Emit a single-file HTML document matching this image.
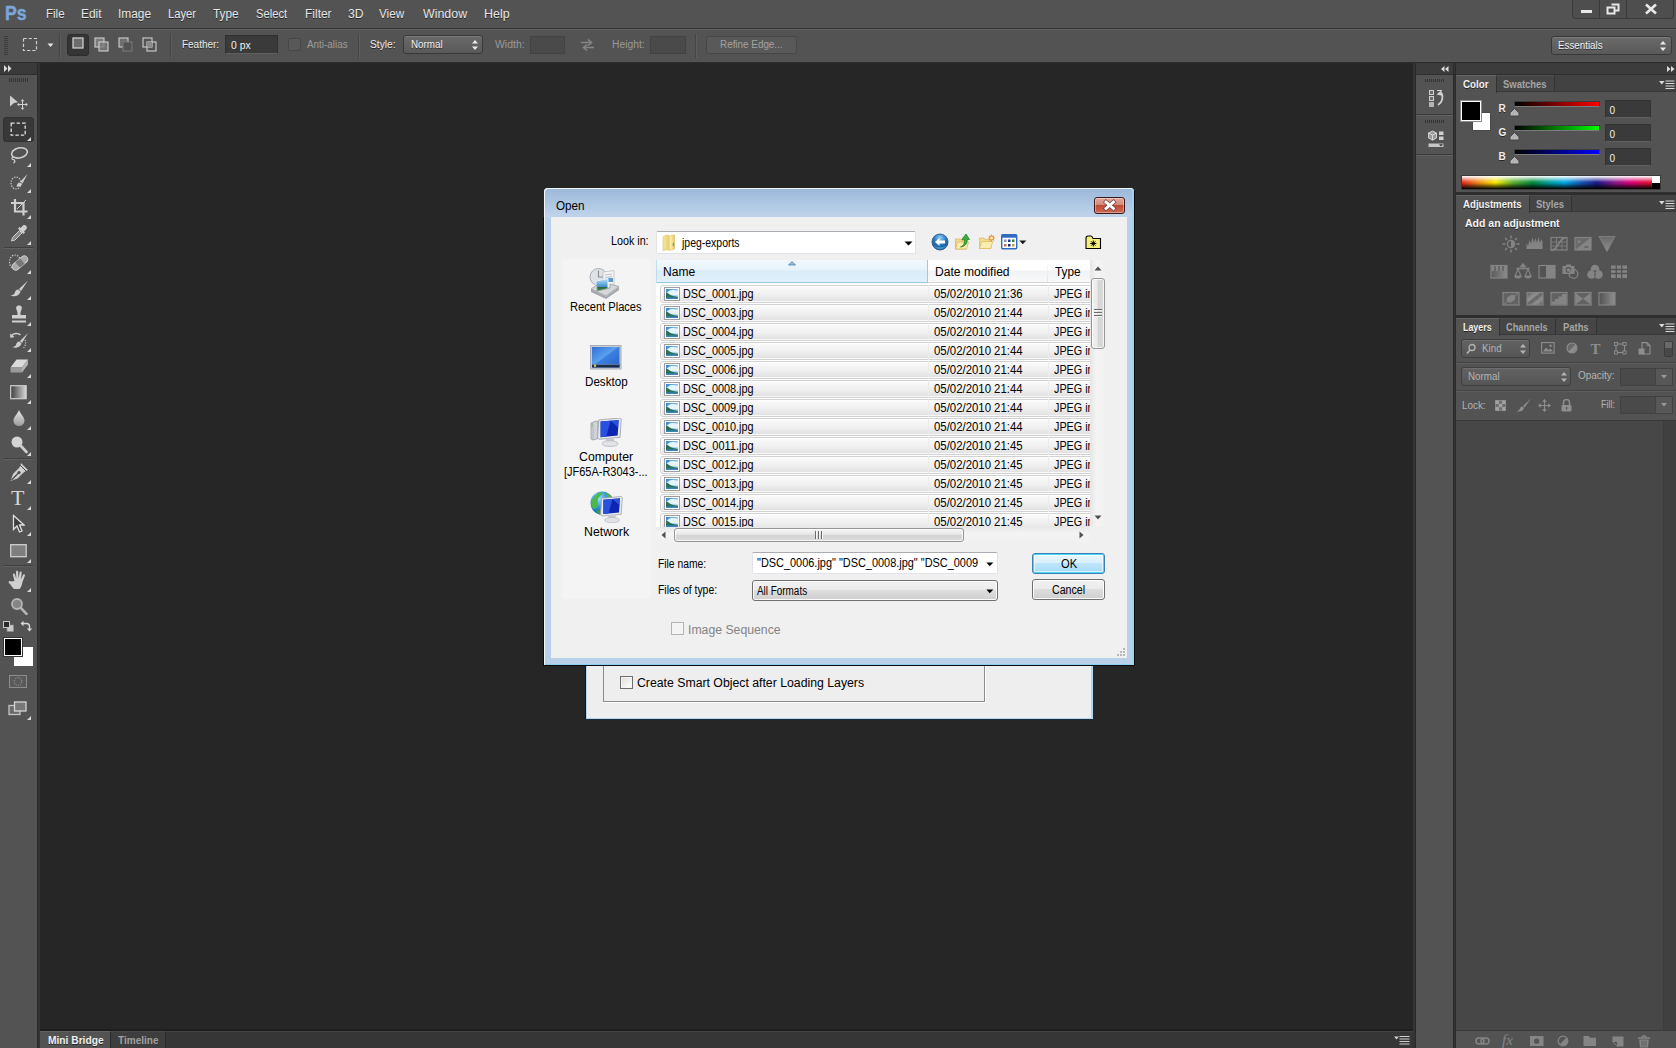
<!DOCTYPE html>
<html><head><meta charset="utf-8"><title>Photoshop - Open</title>
<style>
html,body{margin:0;padding:0;}
body{width:1676px;height:1048px;overflow:hidden;background:#262626;position:relative;font-family:"Liberation Sans",sans-serif;}
.b{position:absolute;box-sizing:border-box;display:block;}
.t{position:absolute;white-space:nowrap;display:block;transform-origin:0 50%;}
.sh{text-shadow:0 1px 0 rgba(0,0,0,.55);}
.bd{font-weight:bold;}
</style></head><body>
<div class="b " style="left:0px;top:0px;width:1676px;height:28px;background:#535353;"></div>
<div class="b " style="left:0px;top:28px;width:1676px;height:1px;background:#333;"></div>
<div class="b " style="left:0px;top:29px;width:1676px;height:33px;background:#535353;border-top:1px solid #626262;"></div>
<div class="b " style="left:0px;top:62px;width:1676px;height:1px;background:#2c2c2c;"></div>
<span id="t1" class="t " style="left:5px;top:1px;font-size:21px;line-height:24px;color:#7aa6da;transform:scaleX(0.8409);font-weight:bold;-webkit-text-stroke:.500px #7aa6da;">Ps</span>
<span id="t2" class="t sh" style="left:46px;top:5px;font-size:13px;line-height:17px;color:#e6e6e6;transform:scaleX(0.8877);">File</span>
<span id="t3" class="t sh" style="left:81px;top:5px;font-size:13px;line-height:17px;color:#e6e6e6;transform:scaleX(0.9194);">Edit</span>
<span id="t4" class="t sh" style="left:117.5px;top:5px;font-size:13px;line-height:17px;color:#e6e6e6;transform:scaleX(0.9159);">Image</span>
<span id="t5" class="t sh" style="left:168px;top:5px;font-size:13px;line-height:17px;color:#e6e6e6;transform:scaleX(0.8638);">Layer</span>
<span id="t6" class="t sh" style="left:212.5px;top:5px;font-size:13px;line-height:17px;color:#e6e6e6;transform:scaleX(0.9082);">Type</span>
<span id="t7" class="t sh" style="left:255.5px;top:5px;font-size:13px;line-height:17px;color:#e6e6e6;transform:scaleX(0.8605);">Select</span>
<span id="t8" class="t sh" style="left:304.5px;top:5px;font-size:13px;line-height:17px;color:#e6e6e6;transform:scaleX(0.9207);">Filter</span>
<span id="t9" class="t sh" style="left:347.5px;top:5px;font-size:13px;line-height:17px;color:#e6e6e6;transform:scaleX(0.9383);">3D</span>
<span id="t10" class="t sh" style="left:379px;top:5px;font-size:13px;line-height:17px;color:#e6e6e6;transform:scaleX(0.8979);">View</span>
<span id="t11" class="t sh" style="left:423px;top:5px;font-size:13px;line-height:17px;color:#e6e6e6;transform:scaleX(0.9535);">Window</span>
<span id="t12" class="t sh" style="left:484px;top:5px;font-size:13px;line-height:17px;color:#e6e6e6;transform:scaleX(0.9570);">Help</span>
<div class="b " style="left:1572px;top:0px;width:102px;height:19px;background:#4e4e4e;border:1px solid #3a3a3a;border-top:none;border-radius:0 0 4px 4px;"></div>
<div class="b " style="left:1599px;top:0px;width:1px;height:18px;background:#3a3a3a;"></div>
<div class="b " style="left:1626px;top:0px;width:1px;height:18px;background:#3a3a3a;"></div>
<div class="b " style="left:1581px;top:10px;width:11px;height:3px;background:#e8e8e8;"></div>
<svg class="b" style="left:1606px;top:3px;" width="14" height="12" viewBox="0 0 14 12"><path d="M5.5 1.5h7v6h-3M1.5 4.5h7v6h-7z" fill="none" stroke="#e8e8e8" stroke-width="2"/></svg>
<svg class="b" style="left:1644px;top:3px;" width="14" height="12" viewBox="0 0 14 12"><path d="M2 1.5l10 9M12 1.5l-10 9" fill="none" stroke="#e8e8e8" stroke-width="2.6"/></svg>
<div class="b " style="left:4px;top:36px;width:4px;height:20px;background:repeating-linear-gradient(#3c3c3c 0 1px,transparent 1px 2px);"></div>
<svg class="b" style="left:22px;top:37px;" width="17" height="17" viewBox="0 0 17 17"><rect x="1.5" y="1.5" width="13" height="12" fill="none" stroke="#d0d0d0" stroke-width="1.2" stroke-dasharray="3.2 2"/></svg>
<svg class="b" style="left:47px;top:43px;" width="8" height="5" viewBox="0 0 8 5"><path d="M0.5 0.5h6l-3 3.6z" fill="#e4e4e4"/></svg>
<div class="b " style="left:59px;top:34px;width:1px;height:24px;background:#454545;border-right:1px solid #5e5e5e;width:2px;"></div>
<div class="b " style="left:67px;top:34px;width:22px;height:22px;background:#353535;border:1px solid #2d2d2d;border-radius:3px;"></div>
<svg class="b" style="left:72px;top:37px;" width="12" height="12" viewBox="0 0 12 12"><rect x="1" y="1" width="10" height="10" fill="#6c6c6c" stroke="#d8d8d8" stroke-width="1.2"/></svg>
<svg class="b" style="left:94px;top:37px;" width="16" height="16" viewBox="0 0 16 16"><rect x="1" y="1" width="9" height="9" fill="#7a7a7a" stroke="#cfcfcf" stroke-width="1.1"/><rect x="5" y="5" width="9" height="9" fill="#7a7a7a" fill-opacity=".8" stroke="#cfcfcf" stroke-width="1.1"/></svg>
<svg class="b" style="left:118px;top:37px;" width="16" height="16" viewBox="0 0 16 16"><rect x="1" y="1" width="9" height="9" fill="#6e6e6e" stroke="#cfcfcf" stroke-width="1.1"/><rect x="5" y="5" width="9" height="9" fill="#535353" stroke="#777" stroke-width="1.1"/></svg>
<svg class="b" style="left:142px;top:37px;" width="16" height="16" viewBox="0 0 16 16"><rect x="1" y="1" width="9" height="9" fill="none" stroke="#cfcfcf" stroke-width="1.1"/><rect x="5" y="5" width="9" height="9" fill="none" stroke="#cfcfcf" stroke-width="1.1"/><rect x="5" y="5" width="5" height="5" fill="#8a8a8a"/></svg>
<div class="b " style="left:170px;top:34px;width:2px;height:24px;background:#454545;border-right:1px solid #5e5e5e;"></div>
<span id="t13" class="t sh" style="left:181.5px;top:37px;font-size:10px;line-height:15px;color:#ececec;transform:scaleX(0.9960);">Feather:</span>
<div class="b " style="left:225px;top:35px;width:53px;height:19px;background:#3a3a3a;border:1px solid #2f2f2f;border-bottom-color:#606060;"></div>
<span id="t14" class="t " style="left:230.5px;top:38px;font-size:10px;line-height:15px;color:#f0f0f0;transform:scaleX(1.0367);">0 px</span>
<div class="b " style="left:288px;top:38px;width:13px;height:13px;background:#585858;border:1px solid #474747;border-radius:2px;"></div>
<span id="t15" class="t " style="left:306.5px;top:37px;font-size:10px;line-height:15px;color:#9c9c9c;transform:scaleX(0.9869);">Anti-alias</span>
<div class="b " style="left:358px;top:34px;width:2px;height:24px;background:#454545;border-right:1px solid #5e5e5e;"></div>
<span id="t16" class="t sh" style="left:370px;top:37px;font-size:10px;line-height:15px;color:#ececec;transform:scaleX(1.0234);">Style:</span>
<div class="b " style="left:403px;top:35px;width:80px;height:19px;background:linear-gradient(#6a6a6a,#595959);border:1px solid #383838;border-radius:3px;box-shadow:inset 0 1px 0 #7c7c7c;"></div>
<span id="t17" class="t sh" style="left:411px;top:37px;font-size:10px;line-height:15px;color:#f2f2f2;transform:scaleX(0.9803);">Normal</span>
<svg class="b" style="left:471px;top:39px;" width="8" height="12" viewBox="0 0 8 12"><path d="M1 4.5l3-3.5 3 3.5zM1 7.5l3 3.5 3-3.5z" fill="#ececec"/></svg>
<span id="t18" class="t " style="left:495px;top:37px;font-size:10px;line-height:15px;color:#9a9a9a;transform:scaleX(1.0443);">Width:</span>
<div class="b " style="left:530px;top:36px;width:35px;height:18px;background:#4a4a4a;border:1px solid #434343;"></div>
<svg class="b" style="left:579px;top:38px;" width="17" height="14" viewBox="0 0 17 14"><path d="M2 4.5h10M9 1.5l3.5 3-3.5 3M15 9.5h-10M8 6.500l-3.500 3 3.500 3" fill="none" stroke="#858585" stroke-width="1.6"/></svg>
<span id="t19" class="t " style="left:612px;top:37px;font-size:10px;line-height:15px;color:#9a9a9a;transform:scaleX(1.0288);">Height:</span>
<div class="b " style="left:650px;top:36px;width:36px;height:18px;background:#4a4a4a;border:1px solid #434343;"></div>
<div class="b " style="left:695px;top:34px;width:2px;height:24px;background:#454545;border-right:1px solid #5e5e5e;"></div>
<div class="b " style="left:706px;top:36px;width:91px;height:18px;background:#595959;border:1px solid #474747;border-radius:3px;"></div>
<span id="t20" class="t " style="left:720px;top:37px;font-size:10px;line-height:15px;color:#a2a2a2;transform:scaleX(0.9878);">Refine Edge...</span>
<div class="b " style="left:1551px;top:36px;width:121px;height:19px;background:linear-gradient(#6a6a6a,#595959);border:1px solid #383838;border-radius:3px;box-shadow:inset 0 1px 0 #7c7c7c;"></div>
<span id="t21" class="t sh" style="left:1558px;top:38px;font-size:10px;line-height:15px;color:#f2f2f2;transform:scaleX(0.9785);">Essentials</span>
<svg class="b" style="left:1659px;top:40px;" width="8" height="12" viewBox="0 0 8 12"><path d="M1 4.5l3-3.5 3 3.5zM1 7.5l3 3.5 3-3.5z" fill="#ececec"/></svg>
<div class="b " style="left:0px;top:63px;width:37px;height:985px;background:#535353;"></div>
<div class="b " style="left:37px;top:63px;width:1px;height:985px;background:#2c2c2c;"></div>
<div class="b " style="left:38px;top:63px;width:2px;height:985px;background:#333;"></div>
<div class="b " style="left:0px;top:63px;width:37px;height:12px;background:#3a3a3a;border-bottom:1px solid #2e2e2e;"></div>
<svg class="b" style="left:4px;top:65px;" width="8" height="7" viewBox="0 0 8 7"><path d="M0 0l3.500 3.500-3.500 3.500zM4 0l3.500 3.500-3.500 3.500z" fill="#dcdcdc"/></svg>
<div class="b " style="left:9px;top:78px;width:20px;height:4px;background:repeating-linear-gradient(90deg,#333 0 1px,transparent 1px 2px);"></div>
<div class="b " style="left:4px;top:247px;width:29px;height:1px;background:#3e3e3e;border-bottom:1px solid #616161;height:2px;"></div>
<div class="b " style="left:4px;top:458px;width:29px;height:1px;background:#3e3e3e;border-bottom:1px solid #616161;height:2px;"></div>
<div class="b " style="left:4px;top:565px;width:29px;height:1px;background:#3e3e3e;border-bottom:1px solid #616161;height:2px;"></div>
<div class="b " style="left:3px;top:117px;width:31px;height:25px;background:#383838;border:1px solid #303030;border-radius:3px;"></div>
<svg class="b" style="left:27px;top:137px;" width="4" height="4" viewBox="0 0 4 4"><path d="M4 0v4h-4z" fill="#d8d8d8"/></svg>
<svg class="b" style="left:27px;top:163px;" width="4" height="4" viewBox="0 0 4 4"><path d="M4 0v4h-4z" fill="#d8d8d8"/></svg>
<svg class="b" style="left:27px;top:189px;" width="4" height="4" viewBox="0 0 4 4"><path d="M4 0v4h-4z" fill="#d8d8d8"/></svg>
<svg class="b" style="left:27px;top:215px;" width="4" height="4" viewBox="0 0 4 4"><path d="M4 0v4h-4z" fill="#d8d8d8"/></svg>
<svg class="b" style="left:27px;top:241px;" width="4" height="4" viewBox="0 0 4 4"><path d="M4 0v4h-4z" fill="#d8d8d8"/></svg>
<svg class="b" style="left:27px;top:270px;" width="4" height="4" viewBox="0 0 4 4"><path d="M4 0v4h-4z" fill="#d8d8d8"/></svg>
<svg class="b" style="left:27px;top:296px;" width="4" height="4" viewBox="0 0 4 4"><path d="M4 0v4h-4z" fill="#d8d8d8"/></svg>
<svg class="b" style="left:27px;top:322px;" width="4" height="4" viewBox="0 0 4 4"><path d="M4 0v4h-4z" fill="#d8d8d8"/></svg>
<svg class="b" style="left:27px;top:348px;" width="4" height="4" viewBox="0 0 4 4"><path d="M4 0v4h-4z" fill="#d8d8d8"/></svg>
<svg class="b" style="left:27px;top:374px;" width="4" height="4" viewBox="0 0 4 4"><path d="M4 0v4h-4z" fill="#d8d8d8"/></svg>
<svg class="b" style="left:27px;top:400px;" width="4" height="4" viewBox="0 0 4 4"><path d="M4 0v4h-4z" fill="#d8d8d8"/></svg>
<svg class="b" style="left:27px;top:426px;" width="4" height="4" viewBox="0 0 4 4"><path d="M4 0v4h-4z" fill="#d8d8d8"/></svg>
<svg class="b" style="left:27px;top:452px;" width="4" height="4" viewBox="0 0 4 4"><path d="M4 0v4h-4z" fill="#d8d8d8"/></svg>
<svg class="b" style="left:27px;top:480px;" width="4" height="4" viewBox="0 0 4 4"><path d="M4 0v4h-4z" fill="#d8d8d8"/></svg>
<svg class="b" style="left:27px;top:506px;" width="4" height="4" viewBox="0 0 4 4"><path d="M4 0v4h-4z" fill="#d8d8d8"/></svg>
<svg class="b" style="left:27px;top:532px;" width="4" height="4" viewBox="0 0 4 4"><path d="M4 0v4h-4z" fill="#d8d8d8"/></svg>
<svg class="b" style="left:27px;top:559px;" width="4" height="4" viewBox="0 0 4 4"><path d="M4 0v4h-4z" fill="#d8d8d8"/></svg>
<svg class="b" style="left:27px;top:588px;" width="4" height="4" viewBox="0 0 4 4"><path d="M4 0v4h-4z" fill="#d8d8d8"/></svg>
<svg class="b" style="left:9px;top:94px;" width="20" height="18" viewBox="0 0 20 18"><path d="M1 1.500l8 6.800-4 .700-4 3.500z" fill="#cfcfcf"/><path d="M13.500 6.500v8M9.500 10.500h8" stroke="#cfcfcf" stroke-width="1" fill="none"/><path d="M13.500 5l-1.800 2.200h3.600zM13.500 16l-1.800-2.200h3.600zM8 10.500l2.200-1.800v3.600zM19 10.500l-2.200-1.800v3.600z" fill="#cfcfcf"/></svg>
<svg class="b" style="left:10px;top:122px;" width="17" height="15" viewBox="0 0 17 15"><rect x="1.200" y="1.200" width="14" height="12" fill="none" stroke="#e0e0e0" stroke-width="1.300" stroke-dasharray="3.400 2"/></svg>
<svg class="b" style="left:9px;top:146px;" width="20" height="18" viewBox="0 0 20 18"><ellipse cx="10.500" cy="7" rx="8" ry="5" fill="none" stroke="#cfcfcf" stroke-width="1.600" transform="rotate(-12 10 7)"/><path d="M4.500 10.500c-2 1-2 3 0 3.200s1.500 2.500 0 3.300" fill="none" stroke="#cfcfcf" stroke-width="1.300"/></svg>
<svg class="b" style="left:9px;top:172px;" width="20" height="19" viewBox="0 0 20 19"><ellipse cx="7" cy="11" rx="5" ry="6" fill="none" stroke="#cfcfcf" stroke-width="1.200" stroke-dasharray="1.300 1.300"/><path d="M18.500 2l-7 7.500 2 2z" fill="#cfcfcf"/><path d="M11 10.500c-2 0-3 2-3.500 4 2.500.5 5-.5 5.500-2z" fill="#cfcfcf"/></svg>
<svg class="b" style="left:10px;top:198px;" width="19" height="19" viewBox="0 0 19 19"><path d="M5 1v12.500h12.500M1 5h12.500v12.500" fill="none" stroke="#cfcfcf" stroke-width="2.200"/><path d="M16 2l-9 9" stroke="#cfcfcf" stroke-width="1"/></svg>
<svg class="b" style="left:10px;top:224px;" width="18" height="19" viewBox="0 0 18 19"><path d="M13 1.500c2-1.500 5 1.500 3.500 3.500l-2.500 2.500 1 1-1.500 1.500-5.500-5.500 1.500-1.500 1 1z" fill="#cfcfcf"/><path d="M9.500 6.500l-7 7-1 3.500 3.500-1 7-7z" fill="#8a8a8a" stroke="#cfcfcf" stroke-width="1"/></svg>
<svg class="b" style="left:8px;top:252px;" width="22" height="20" viewBox="0 0 22 20"><ellipse cx="7" cy="10" rx="5.500" ry="7" fill="none" stroke="#cfcfcf" stroke-width="1.200" stroke-dasharray="1.300 1.300"/><g transform="rotate(-40 12 11)"><rect x="3" y="7.500" width="18" height="7" rx="3.500" fill="#a8a8a8" stroke="#cfcfcf" stroke-width="1"/><rect x="9" y="7.500" width="6" height="7" fill="#777"/></g></svg>
<svg class="b" style="left:9px;top:279px;" width="20" height="19" viewBox="0 0 20 19"><path d="M19 1.500l-9 8.500 2 2z" fill="#cfcfcf"/><path d="M9.500 10.500c-2.500 0-3.500 2-4 4-1 1.500-3 2-4.500 2 3 1.500 9 1.500 10.500-4z" fill="#cfcfcf"/></svg>
<svg class="b" style="left:10px;top:304px;" width="18" height="20" viewBox="0 0 18 20"><path d="M9 1.500c2.500 0 3.500 2 2.500 4l-1 3v2.500h5.500v3.500h-14v-3.500h5.500v-2.500l-1-3c-1-2 0-4 2.500-4z" fill="#cfcfcf"/><rect x="2" y="16.500" width="14" height="2" fill="#cfcfcf"/></svg>
<svg class="b" style="left:9px;top:331px;" width="20" height="19" viewBox="0 0 20 19"><path d="M19 2l-8 8 2 2z" fill="#cfcfcf"/><path d="M10.500 10.500c-2 0-3 1.500-3.500 3.500-1 1.500-2.500 2-4 2 3 1.500 8 1 9.500-3.500z" fill="#cfcfcf"/><path d="M2 5.500c2-3.500 7-4 9.500-1.500" fill="none" stroke="#cfcfcf" stroke-width="1.500"/><path d="M1 2.500l.500 4.500 4-1z" fill="#cfcfcf"/><path d="M16 9c1.500 3 0 7-2 8.500" fill="none" stroke="#cfcfcf" stroke-width="1.100" stroke-dasharray="1.200 1.200"/></svg>
<svg class="b" style="left:9px;top:358px;" width="20" height="17" viewBox="0 0 20 17"><path d="M7.500 1.500h11.500l-6 8h-11.500z" fill="#dadada"/><path d="M1.500 9.500h11.500v5h-11.500z" fill="#9a9a9a"/><path d="M13 9.500l6-8v5l-6 8z" fill="#b4b4b4"/></svg>
<svg class="b" style="left:10px;top:385px;" width="17" height="15" viewBox="0 0 17 15"><defs><linearGradient id="gt" x1="0" x2="1"><stop offset="0" stop-color="#3c3c3c"/><stop offset="1" stop-color="#d8d8d8"/></linearGradient></defs><rect x=".700" y=".700" width="15.500" height="13" fill="url(#gt)" stroke="#cfcfcf" stroke-width="1.200"/></svg>
<svg class="b" style="left:12px;top:409px;" width="14" height="18" viewBox="0 0 14 18"><defs><linearGradient id="gd" x1="0" x2="0" y1="0" y2="1"><stop offset="0" stop-color="#e8e8e8"/><stop offset="1" stop-color="#9c9c9c"/></linearGradient></defs><path d="M7 1c1.500 4 5.500 7 5.500 10.500a5.500 5.500 0 0 1-11 0c0-3.500 4-6.500 5.500-10.500z" fill="url(#gd)"/></svg>
<svg class="b" style="left:10px;top:435px;" width="18" height="19" viewBox="0 0 18 19"><circle cx="7" cy="7" r="5.500" fill="#d4d4d4"/><path d="M10.500 10.500l6 6.500" stroke="#cfcfcf" stroke-width="2.600" stroke-linecap="round"/></svg>
<svg class="b" style="left:9px;top:462px;" width="20" height="20" viewBox="0 0 20 20"><path d="M12 1l7 7-3 1.500c-2.500 1.500-5 5-7.500 7l-7 2.500 2.500-7c2-2.500 5.500-5 7-7.500z" fill="#cfcfcf"/><path d="M2.500 18l6.500-6.500" stroke="#4a4a4a" stroke-width="1.200"/><circle cx="10" cy="10.500" r="1.600" fill="#4a4a4a"/><path d="M11 3l6.500 6.500" stroke="#4a4a4a" stroke-width="1"/></svg>
<span id="t22" class="t " style="left:11px;top:486px;font-size:22px;line-height:24px;color:#d6d6d6;font-family:'Liberation Serif',serif;">T</span>
<svg class="b" style="left:12px;top:514px;" width="13" height="20" viewBox="0 0 13 20"><path d="M1.500 1.500v14l3.500-3.500 2.500 6 2.500-1-2.500-6h4.500z" fill="#3c3c3c" stroke="#e0e0e0" stroke-width="1.300"/></svg>
<svg class="b" style="left:10px;top:544px;" width="17" height="14" viewBox="0 0 17 14"><rect x=".700" y=".700" width="15.500" height="12" fill="#7e7e7e" stroke="#cfcfcf" stroke-width="1.300"/></svg>
<svg class="b" style="left:8px;top:570px;" width="22" height="20" viewBox="0 0 22 20"><path d="M6.500 11l-1.500-6c-.400-1.600 1.600-2.100 2-.600l1.300 4.600-.300-7c0-1.600 2.100-1.600 2.200 0l.400 6.800 1-6.300c.300-1.500 2.300-1.200 2.100.400l-.800 6.600 2-4.500c.700-1.400 2.500-.500 1.900.900l-2.300 6.100c-.500 3-1.500 5.500-3 7h-5.500c-1.500-1.500-3-4-5-6-1-1.300.500-2.600 1.700-1.500z" fill="#cfcfcf"/></svg>
<svg class="b" style="left:10px;top:597px;" width="18" height="19" viewBox="0 0 18 19"><circle cx="7" cy="7" r="5" fill="#858585" stroke="#b4b4b4" stroke-width="1.800"/><path d="M10.800 10.800l5.700 6" stroke="#b4b4b4" stroke-width="2.600" stroke-linecap="round"/></svg>
<svg class="b" style="left:3px;top:621px;" width="11" height="11" viewBox="0 0 11 11"><rect x="4" y="4" width="6.500" height="6.500" fill="#c8c8c8" stroke="#8a8a8a" stroke-width=".600"/><rect x=".500" y=".500" width="6" height="6" fill="#2a2a2a" stroke="#c8c8c8"/></svg>
<svg class="b" style="left:20px;top:620px;" width="12" height="12" viewBox="0 0 12 12"><path d="M3 3.500h3.500a3 3 0 0 1 3 3v2.500" fill="none" stroke="#d8d8d8" stroke-width="1.400"/><path d="M.500 3.500l3-2.700v5.400zM9.500 11.500l-2.700-3h5.400z" fill="#d8d8d8"/></svg>
<div class="b " style="left:14px;top:647px;width:19px;height:19px;background:#fff;"></div>
<div class="b " style="left:4px;top:638px;width:18px;height:18px;background:#000;border:1px solid #fff;outline:1px solid #333;"></div>
<svg class="b" style="left:9px;top:675px;" width="20" height="14" viewBox="0 0 20 14"><rect x=".500" y=".500" width="17" height="12" fill="#5a5a5a" stroke="#8c8c8c"/><circle cx="9" cy="6.500" r="3.800" fill="none" stroke="#a0a0a0" stroke-dasharray="1.200 1.200"/></svg>
<svg class="b" style="left:8px;top:701px;" width="20" height="16" viewBox="0 0 20 16"><rect x="1" y="4.500" width="11" height="9" fill="#6a6a6a" stroke="#c4c4c4" stroke-width="1.300"/><rect x="6.500" y="1" width="11.500" height="9" fill="#787878" stroke="#d4d4d4" stroke-width="1.300"/></svg>
<svg class="b" style="left:27px;top:716px;" width="4" height="4" viewBox="0 0 4 4"><path d="M4 0v4h-4z" fill="#d8d8d8"/></svg>
<div class="b " style="left:40px;top:1029px;width:1374px;height:2px;background:#1e1e1e;"></div>
<div class="b " style="left:40px;top:1031px;width:1374px;height:17px;background:#363636;border-top:1px solid #424242;"></div>
<div class="b " style="left:40px;top:1031px;width:71px;height:17px;background:#535353;border-right:1px solid #2c2c2c;border-top:1px solid #626262;"></div>
<div class="b " style="left:111px;top:1031px;width:55px;height:17px;background:#3e3e3e;border-right:1px solid #2c2c2c;border-top:1px solid #484848;"></div>
<span id="t23" class="t sh bd" style="left:47.5px;top:1032.5px;font-size:10px;line-height:15px;color:#f0f0f0;transform:scaleX(1.0211);">Mini Bridge</span>
<span id="t24" class="t bd" style="left:117.5px;top:1032.5px;font-size:10px;line-height:15px;color:#a0a0a0;transform:scaleX(1.0052);">Timeline</span>
<svg class="b" style="left:1394px;top:1035px;" width="16" height="11" viewBox="0 0 16 11"><path d="M0 1.500l2.500 3 2.500-3z" fill="#d0d0d0"/><path d="M5.500 1.500h10M5.500 4h10M5.500 6.500h10M5.500 9h10" stroke="#d0d0d0" stroke-width="1"/></svg>
<div class="b " style="left:1413px;top:63px;width:2px;height:985px;background:#343434;"></div>
<div class="b " style="left:1415px;top:63px;width:1px;height:985px;background:#292929;"></div>
<div class="b " style="left:1416px;top:63px;width:37px;height:985px;background:#535353;"></div>
<div class="b " style="left:1453px;top:63px;width:3px;height:985px;background:linear-gradient(90deg,#2a2a2a 0 1px,#363636 1px 2px,#2a2a2a 2px 3px);"></div>
<div class="b " style="left:1456px;top:63px;width:220px;height:985px;background:#535353;"></div>
<div class="b " style="left:1416px;top:63px;width:37px;height:12px;background:#3c3c3c;border-bottom:1px solid #303030;"></div>
<div class="b " style="left:1456px;top:63px;width:220px;height:12px;background:#3c3c3c;border-bottom:1px solid #303030;"></div>
<svg class="b" style="left:1441px;top:66px;" width="8" height="6" viewBox="0 0 8 6"><path d="M3.500 0l-3.500 3 3.500 3zM7.500 0l-3.500 3 3.500 3z" fill="#dcdcdc"/></svg>
<svg class="b" style="left:1667px;top:66px;" width="8" height="6" viewBox="0 0 8 6"><path d="M0 0l3.500 3-3.500 3zM4 0l3.500 3-3.500 3z" fill="#dcdcdc"/></svg>
<div class="b " style="left:1425px;top:79px;width:20px;height:3px;background:repeating-linear-gradient(90deg,#333 0 1px,transparent 1px 2px);"></div>
<div class="b " style="left:1416px;top:114px;width:37px;height:2px;background:#3a3a3a;border-bottom:1px solid #626262;"></div>
<div class="b " style="left:1425px;top:120px;width:20px;height:3px;background:repeating-linear-gradient(90deg,#333 0 1px,transparent 1px 2px);"></div>
<div class="b " style="left:1416px;top:154px;width:37px;height:2px;background:#3a3a3a;border-bottom:1px solid #626262;"></div>
<svg class="b" style="left:1428px;top:89px;" width="17" height="19" viewBox="0 0 17 19"><rect x="1.500" y="1.500" width="4" height="4" fill="#6a6a6a" stroke="#cfcfcf"/><rect x="1.500" y="7.500" width="4" height="4" fill="#6a6a6a" stroke="#cfcfcf"/><rect x="1" y="13" width="5" height="5" fill="#b4b4b4"/><path d="M10 16c4.500-2.500 5.500-8 3.500-12" fill="none" stroke="#d0d0d0" stroke-width="1.800"/><path d="M8.500 5.500l4.500-4 2 5.500z" fill="#d0d0d0"/><path d="M9 1.500h5" stroke="#d0d0d0" stroke-width="1"/></svg>
<svg class="b" style="left:1428px;top:130px;" width="17" height="19" viewBox="0 0 17 19"><path d="M4.500 1l4 2v5l-4 2.200-4-2.200v-5z" fill="#9a9a9a" stroke="#dcdcdc" stroke-width=".900"/><path d="M.500 3l4 2 4-2M4.500 5v5" fill="none" stroke="#dcdcdc" stroke-width=".900"/><rect x="11" y="1.500" width="4.500" height="3.500" fill="#d0d0d0"/><rect x="11" y="6.500" width="4.500" height="3.500" fill="#d0d0d0"/><rect x=".500" y="13.500" width="15" height="3.500" fill="#c4c4c4"/><path d="M11 14.200h4l-2 2.400z" fill="#333"/></svg>
<div class="b " style="left:1456px;top:75px;width:220px;height:17px;background:#424242;border-bottom:1px solid #383838;"></div><div class="b " style="left:1456px;top:75px;width:41px;height:18px;background:#535353;border-right:1px solid #333;border-top:1px solid #656565;"></div><span id="t25" class="t sh bd" style="left:1463px;top:77px;font-size:10px;line-height:15px;color:#f2f2f2;transform:scaleX(0.9805);">Color</span><div class="b " style="left:1497px;top:75px;width:58px;height:17px;border-right:1px solid #333;border-top:1px solid #4e4e4e;border-bottom:1px solid #383838;background:#454545;"></div><span id="t26" class="t bd" style="left:1503px;top:77px;font-size:10px;line-height:15px;color:#a6a6a6;transform:scaleX(0.9449);">Swatches</span><svg class="b" style="left:1659px;top:80px;" width="16" height="10" viewBox="0 0 16 10"><path d="M0 1l2.800 3.400 2.800-3.400z" fill="#d8d8d8"/><path d="M6.500 1h9M6.500 3.500h9M6.500 6h9M6.500 8.500h9" stroke="#d8d8d8" stroke-width="1"/></svg>
<div class="b " style="left:1472px;top:112px;width:19px;height:19px;background:#fff;border:1px solid #4a4a4a;"></div>
<div class="b " style="left:1460px;top:100px;width:22px;height:22px;background:#000;border:1px solid #8a8a8a;box-shadow:inset 0 0 0 1px #fff;"></div>
<span id="t27" class="t sh bd" style="left:1498.5px;top:101px;font-size:10px;line-height:15px;color:#f0f0f0;">R</span>
<div class="b " style="left:1514px;top:101px;width:86px;height:6px;background:linear-gradient(90deg,#000,#f00);border:1px solid #3c3c3c;border-bottom-color:#7a7a7a;"></div>
<svg class="b" style="left:1509px;top:108px;" width="11" height="9" viewBox="0 0 11 9"><path d="M5.500 .500l4.500 4.500v3h-9v-3z" fill="#b4b4b4" stroke="#3c3c3c" stroke-width=".800"/></svg>
<div class="b " style="left:1605px;top:100px;width:46px;height:18px;background:#3a3a3a;border:1px solid #333;border-bottom-color:#606060;"></div>
<span id="t28" class="t " style="left:1609.5px;top:103px;font-size:10px;line-height:15px;color:#f0f0f0;">0</span>
<span id="t29" class="t sh bd" style="left:1498.5px;top:125px;font-size:10px;line-height:15px;color:#f0f0f0;">G</span>
<div class="b " style="left:1514px;top:125px;width:86px;height:6px;background:linear-gradient(90deg,#000,#0f0);border:1px solid #3c3c3c;border-bottom-color:#7a7a7a;"></div>
<svg class="b" style="left:1509px;top:132px;" width="11" height="9" viewBox="0 0 11 9"><path d="M5.500 .500l4.500 4.500v3h-9v-3z" fill="#b4b4b4" stroke="#3c3c3c" stroke-width=".800"/></svg>
<div class="b " style="left:1605px;top:124px;width:46px;height:18px;background:#3a3a3a;border:1px solid #333;border-bottom-color:#606060;"></div>
<span id="t30" class="t " style="left:1609.5px;top:127px;font-size:10px;line-height:15px;color:#f0f0f0;">0</span>
<span id="t31" class="t sh bd" style="left:1498.5px;top:149px;font-size:10px;line-height:15px;color:#f0f0f0;">B</span>
<div class="b " style="left:1514px;top:149px;width:86px;height:6px;background:linear-gradient(90deg,#000,#00f);border:1px solid #3c3c3c;border-bottom-color:#7a7a7a;"></div>
<svg class="b" style="left:1509px;top:156px;" width="11" height="9" viewBox="0 0 11 9"><path d="M5.500 .500l4.500 4.500v3h-9v-3z" fill="#b4b4b4" stroke="#3c3c3c" stroke-width=".800"/></svg>
<div class="b " style="left:1605px;top:148px;width:46px;height:18px;background:#3a3a3a;border:1px solid #333;border-bottom-color:#606060;"></div>
<span id="t32" class="t " style="left:1609.5px;top:151px;font-size:10px;line-height:15px;color:#f0f0f0;">0</span>
<div class="b " style="left:1461px;top:175px;width:200px;height:15px;border:1px solid #3a3a3a;background:linear-gradient(rgba(255,255,255,1) 0%,rgba(255,255,255,0) 48%,rgba(0,0,0,0) 52%,rgba(0,0,0,1) 100%),linear-gradient(90deg,#e8281e 0%,#f08a1a 8%,#f6ea00 17%,#5ab030 26%,#008a3c 36%,#00a0a0 44%,#00a8e8 52%,#1858b8 60%,#1c1a8a 68%,#8a1a8c 77%,#dc007c 85%,#e0103c 93%,#e01a28 100%);"></div>
<div class="b " style="left:1652px;top:176px;width:8px;height:7px;background:#fff;"></div>
<div class="b " style="left:1652px;top:183px;width:8px;height:6px;background:#000;"></div>
<div class="b " style="left:1456px;top:192px;width:220px;height:3px;background:#2e2e2e;"></div>
<div class="b " style="left:1456px;top:195px;width:220px;height:17px;background:#424242;border-bottom:1px solid #383838;"></div><div class="b " style="left:1456px;top:195px;width:74px;height:18px;background:#535353;border-right:1px solid #333;border-top:1px solid #656565;"></div><span id="t33" class="t sh bd" style="left:1463px;top:197px;font-size:10px;line-height:15px;color:#f2f2f2;transform:scaleX(0.9676);">Adjustments</span><div class="b " style="left:1530px;top:195px;width:42px;height:17px;border-right:1px solid #333;border-top:1px solid #4e4e4e;border-bottom:1px solid #383838;background:#454545;"></div><span id="t34" class="t bd" style="left:1536px;top:197px;font-size:10px;line-height:15px;color:#a6a6a6;transform:scaleX(0.9536);">Styles</span><svg class="b" style="left:1659px;top:200px;" width="16" height="10" viewBox="0 0 16 10"><path d="M0 1l2.800 3.400 2.800-3.400z" fill="#d8d8d8"/><path d="M6.500 1h9M6.500 3.500h9M6.500 6h9M6.500 8.500h9" stroke="#d8d8d8" stroke-width="1"/></svg>
<span id="t35" class="t sh bd" style="left:1465px;top:216px;font-size:10px;line-height:15px;color:#f4f4f4;transform:scaleX(1.0509);">Add an adjustment</span>
<svg class="b" style="left:1501.5px;top:235px;" width="18" height="18" viewBox="0 0 18 18"><circle cx="9" cy="9" r="3.600" fill="none" stroke="#848484" stroke-width="1.300"/><path d="M9 5.400a3.600 3.600 0 0 1 0 7.200z" fill="#848484"/><path d="M9 .500v3M9 14.500v3M.500 9h3M14.500 9h3M3 3l2 2M13 13l2 2M3 15l2-2M13 5l2-2" stroke="#848484" stroke-width="1.400"/></svg>
<svg class="b" style="left:1526px;top:235px;" width="18" height="18" viewBox="0 0 18 18"><path d="M.500 14v-6l1.500 3 1.500-6 1.500 4 1.500-7 1.500 6 1.500-5 1.500 5 1.500-6 1.500 6 1.500-4 1 3v7z" fill="#848484"/></svg>
<svg class="b" style="left:1550px;top:235px;" width="18" height="18" viewBox="0 0 18 18"><rect x="1" y="2.500" width="16" height="12.500" fill="none" stroke="#848484" stroke-width="1.200"/><path d="M1 7h16M1 11h16M6.500 2.500v12.500M12 2.500v12.500" stroke="#848484" stroke-width=".800"/><path d="M1 15c8 0 7-12.500 16-12.500" fill="none" stroke="#848484" stroke-width="1.500"/></svg>
<svg class="b" style="left:1574px;top:235px;" width="18" height="18" viewBox="0 0 18 18"><rect x="1" y="2.500" width="16" height="12.500" fill="#6a6a6a" stroke="#848484" stroke-width="1.200"/><path d="M1 15l16-12.500v12.500z" fill="#848484"/><path d="M3 6.500h4M5 4.500v4" stroke="#848484" stroke-width="1.100"/><path d="M10.500 12h4" stroke="#555" stroke-width="1.100"/></svg>
<svg class="b" style="left:1598px;top:235px;" width="18" height="18" viewBox="0 0 18 18"><defs><linearGradient id="gv" x1="0" x2="0" y1="0" y2="1"><stop offset="0" stop-color="#6a6a6a"/><stop offset="1" stop-color="#8e8e8e"/></linearGradient></defs><path d="M1 1.500h16l-8 15z" fill="url(#gv)" stroke="#848484" stroke-width=".800"/></svg>
<svg class="b" style="left:1490px;top:263px;" width="18" height="18" viewBox="0 0 18 18"><defs><linearGradient id="gh" x1="0" x2="1"><stop offset="0" stop-color="#5a5a5a"/><stop offset="1" stop-color="#8c8c8c"/></linearGradient></defs><rect x="1" y="2.500" width="16" height="12.500" fill="url(#gh)" stroke="#848484" stroke-width="1.200"/><rect x="1.500" y="3" width="15" height="5" fill="#848484"/><path d="M5 3v5M9 3v5M13 3v5" stroke="#606060" stroke-width="1.600"/></svg>
<svg class="b" style="left:1513.5px;top:263px;" width="18" height="18" viewBox="0 0 18 18"><path d="M9 1.500v3M2.500 5.500h13M9 1l-2 2.500h4z" stroke="#848484" stroke-width="1.500" fill="#848484"/><path d="M4 6l-3 7h6zM14 6l-3 7h6z" fill="none" stroke="#848484" stroke-width="1.100"/><path d="M.500 13h7a3.500 2.500 0 0 1-7 0zM10.500 13h7a3.500 2.500 0 0 1-7 0z" fill="#848484"/></svg>
<svg class="b" style="left:1538px;top:263px;" width="18" height="18" viewBox="0 0 18 18"><rect x="1" y="2.500" width="16" height="12.500" fill="none" stroke="#848484" stroke-width="1.200"/><rect x="8" y="2.500" width="9" height="12.500" fill="#848484"/></svg>
<svg class="b" style="left:1561.5px;top:263px;" width="18" height="18" viewBox="0 0 18 18"><path d="M.500 3h3l1-1.500h4l1 1.500h3v8h-12z" fill="#848484"/><circle cx="6.500" cy="7" r="2.400" fill="none" stroke="#535353" stroke-width="1.100"/><circle cx="11.500" cy="11" r="4.300" fill="none" stroke="#848484" stroke-width="1.300"/></svg>
<svg class="b" style="left:1585.5px;top:263px;" width="18" height="18" viewBox="0 0 18 18"><circle cx="9" cy="6" r="4.300" fill="#848484"/><circle cx="5.500" cy="11.500" r="4.300" fill="#848484"/><circle cx="12.500" cy="11.500" r="4.300" fill="#848484"/><path d="M9 10l-2-2.500h4z" fill="#555"/><path d="M9 10v3.500" stroke="#555" stroke-width="1.200"/></svg>
<svg class="b" style="left:1610px;top:263px;" width="18" height="18" viewBox="0 0 18 18"><rect x="1" y="2.500" width="16" height="12.500" fill="#848484"/><path d="M1 6.500h16M1 10.500h16M6.300 2.500v12.500M11.700 2.500v12.500" stroke="#535353" stroke-width="1.300"/></svg>
<svg class="b" style="left:1502px;top:289.5px;" width="18" height="18" viewBox="0 0 18 18"><rect x="1" y="2.500" width="16" height="12.500" fill="#626262" stroke="#848484" stroke-width="1.200"/><ellipse cx="9" cy="8.700" rx="4.500" ry="3.200" fill="#848484" transform="rotate(-35 9 8.700)"/><path d="M1.500 14.500l15-11.500" stroke="#848484" stroke-width="1"/></svg>
<svg class="b" style="left:1526px;top:289.5px;" width="18" height="18" viewBox="0 0 18 18"><defs><linearGradient id="gp" x1="0" y1="0" x2="1" y2="1"><stop offset="0" stop-color="#5c5c5c"/><stop offset=".350" stop-color="#929292"/><stop offset=".500" stop-color="#626262"/><stop offset=".700" stop-color="#929292"/><stop offset="1" stop-color="#5c5c5c"/></linearGradient></defs><rect x="1" y="2.500" width="16" height="12.500" fill="url(#gp)" stroke="#848484" stroke-width="1.200"/></svg>
<svg class="b" style="left:1550px;top:289.5px;" width="18" height="18" viewBox="0 0 18 18"><rect x="1" y="2.500" width="16" height="12.500" fill="#626262" stroke="#848484" stroke-width="1.200"/><path d="M1.500 14.500v-3h3.500v-2.500h3.500v-2.500h3.500v-2.500h4.500v10.500z" fill="#848484"/></svg>
<svg class="b" style="left:1574px;top:289.5px;" width="18" height="18" viewBox="0 0 18 18"><rect x="1" y="2.500" width="16" height="12.500" fill="#626262" stroke="#848484" stroke-width="1.200"/><path d="M1.500 3l7.500 5.700-7.500 5.800zM16.500 3l-7.500 5.700 7.500 5.800z" fill="#848484"/></svg>
<svg class="b" style="left:1598px;top:289.5px;" width="18" height="18" viewBox="0 0 18 18"><defs><linearGradient id="gg" x1="0" x2="1"><stop offset="0" stop-color="#525252"/><stop offset="1" stop-color="#909090"/></linearGradient></defs><rect x="1" y="2.500" width="16" height="12.500" fill="url(#gg)" stroke="#848484" stroke-width="1.200"/></svg>
<div class="b " style="left:1456px;top:315px;width:220px;height:3px;background:#2e2e2e;"></div>
<div class="b " style="left:1456px;top:318px;width:220px;height:17px;background:#424242;border-bottom:1px solid #383838;"></div><div class="b " style="left:1456px;top:318px;width:44px;height:18px;background:#535353;border-right:1px solid #333;border-top:1px solid #656565;"></div><span id="t36" class="t sh bd" style="left:1463px;top:320px;font-size:10px;line-height:15px;color:#f2f2f2;transform:scaleX(0.8868);">Layers</span><div class="b " style="left:1500px;top:318px;width:56px;height:17px;border-right:1px solid #333;border-top:1px solid #4e4e4e;border-bottom:1px solid #383838;background:#454545;"></div><span id="t37" class="t bd" style="left:1506px;top:320px;font-size:10px;line-height:15px;color:#a6a6a6;transform:scaleX(0.9241);">Channels</span><div class="b " style="left:1556px;top:318px;width:41px;height:17px;border-right:1px solid #333;border-top:1px solid #4e4e4e;border-bottom:1px solid #383838;background:#454545;"></div><span id="t38" class="t bd" style="left:1563px;top:320px;font-size:10px;line-height:15px;color:#a6a6a6;transform:scaleX(0.9400);">Paths</span><svg class="b" style="left:1659px;top:323px;" width="16" height="10" viewBox="0 0 16 10"><path d="M0 1l2.800 3.400 2.800-3.400z" fill="#d8d8d8"/><path d="M6.500 1h9M6.500 3.500h9M6.500 6h9M6.500 8.500h9" stroke="#d8d8d8" stroke-width="1"/></svg>
<div class="b " style="left:1461px;top:339px;width:69px;height:19px;background:linear-gradient(#626262,#555);border:1px solid #3e3e3e;border-radius:3px;box-shadow:inset 0 1px 0 #6e6e6e;"></div>
<svg class="b" style="left:1466px;top:343px;" width="11" height="11" viewBox="0 0 11 11"><circle cx="6" cy="4.500" r="3" fill="none" stroke="#b4b4b4" stroke-width="1.300"/><path d="M4 7l-3 3.500" stroke="#b4b4b4" stroke-width="1.600"/></svg>
<span id="t39" class="t " style="left:1482px;top:341px;font-size:10px;line-height:15px;color:#b4b4b4;transform:scaleX(0.9792);">Kind</span>
<svg class="b" style="left:1518.5px;top:343px;" width="8" height="12" viewBox="0 0 8 12"><path d="M1 4.500l3-3.500 3 3.500zM1 7.500l3 3.500 3-3.500z" fill="#b4b4b4"/></svg>
<svg class="b" style="left:1541px;top:342px;" width="14" height="12" viewBox="0 0 14 12"><rect x=".600" y=".600" width="12.500" height="10.500" fill="none" stroke="#8e8e8e" stroke-width="1.100"/><path d="M2 9.500l3-4 2.500 2.500 2-1.500 2.500 3z" fill="#8e8e8e"/><circle cx="9.500" cy="3.800" r="1.200" fill="#8e8e8e"/></svg>
<svg class="b" style="left:1566px;top:342px;" width="12" height="12" viewBox="0 0 12 12"><circle cx="6" cy="6" r="5" fill="#6a6a6a" stroke="#8e8e8e" stroke-width="1.100"/><path d="M9.500 2.500a5 5 0 0 1-7 7z" fill="#8e8e8e"/></svg>
<span id="t40" class="t " style="left:1590.5px;top:339px;font-size:15px;line-height:20px;color:#8e8e8e;font-family:'Liberation Serif',serif;font-weight:bold;">T</span>
<svg class="b" style="left:1614px;top:342px;" width="13" height="13" viewBox="0 0 13 13"><rect x="2" y="2" width="8.500" height="8.500" fill="none" stroke="#8e8e8e" stroke-width="1.100"/><rect x=".500" y=".500" width="3" height="3" fill="#535353" stroke="#8e8e8e" stroke-width=".900"/><rect x="9" y=".500" width="3" height="3" fill="#535353" stroke="#8e8e8e" stroke-width=".900"/><rect x=".500" y="9" width="3" height="3" fill="#535353" stroke="#8e8e8e" stroke-width=".900"/><rect x="9" y="9" width="3" height="3" fill="#535353" stroke="#8e8e8e" stroke-width=".900"/></svg>
<svg class="b" style="left:1638px;top:342px;" width="13" height="13" viewBox="0 0 13 13"><path d="M4 .600h5l3 3v8.400h-8z" fill="none" stroke="#8e8e8e" stroke-width="1.100"/><path d="M9 .600v3h3" fill="none" stroke="#8e8e8e" stroke-width="1"/><rect x=".500" y="6.500" width="6" height="6" fill="#8e8e8e"/></svg>
<div class="b " style="left:1664px;top:341px;width:9px;height:16px;background:#484848;border:1px solid #3c3c3c;border-radius:2px;"></div>
<div class="b " style="left:1665px;top:342px;width:7px;height:6px;background:#6a6a6a;"></div>
<div class="b " style="left:1456px;top:362px;width:220px;height:2px;background:#444;border-bottom:1px solid #5d5d5d;"></div>
<div class="b " style="left:1461px;top:367px;width:110px;height:19px;background:linear-gradient(#626262,#555);border:1px solid #3e3e3e;border-radius:3px;box-shadow:inset 0 1px 0 #6e6e6e;"></div>
<span id="t41" class="t " style="left:1468px;top:369px;font-size:10px;line-height:15px;color:#b4b4b4;transform:scaleX(0.9803);">Normal</span>
<svg class="b" style="left:1559.5px;top:371px;" width="8" height="12" viewBox="0 0 8 12"><path d="M1 4.500l3-3.500 3 3.500zM1 7.500l3 3.500 3-3.500z" fill="#b4b4b4"/></svg>
<span id="t42" class="t " style="left:1578px;top:368px;font-size:10px;line-height:15px;color:#b4b4b4;transform:scaleX(0.9976);">Opacity:</span>
<div class="b " style="left:1620px;top:368px;width:53px;height:18px;background:#4a4a4a;border:1px solid #424242;"></div>
<div class="b " style="left:1655px;top:369px;width:17px;height:16px;background:#585858;border-left:1px solid #424242;"></div>
<svg class="b" style="left:1661px;top:375px;" width="7" height="4" viewBox="0 0 7 4"><path d="M0 0h6l-3 3.500z" fill="#9a9a9a"/></svg>
<div class="b " style="left:1456px;top:390px;width:220px;height:2px;background:#444;border-bottom:1px solid #5d5d5d;"></div>
<span id="t43" class="t " style="left:1462px;top:398px;font-size:10px;line-height:15px;color:#b4b4b4;transform:scaleX(0.9872);">Lock:</span>
<svg class="b" style="left:1495px;top:400px;" width="11" height="11" viewBox="0 0 11 11"><rect x=".500" y=".500" width="10" height="10" fill="#6e6e6e" stroke="#8e8e8e" stroke-width=".800"/><path d="M.500 .500h3.400v3.400h-3.400zM7.100 .500h3.400v3.400h-3.400zM3.800 3.800h3.400v3.400h-3.400zM.500 7.100h3.400v3.400h-3.400zM7.100 7.100h3.400v3.400h-3.400z" fill="#a2a2a2"/></svg>
<svg class="b" style="left:1515px;top:398px;" width="17" height="14" viewBox="0 0 17 14"><path d="M16 .500l-8 7.500 1.500 1.500z" fill="#8e8e8e"/><path d="M7.500 8.500c-2 0-2.500 1.500-3 3-.800 1-2 1.500-3.500 1.500 2.500 1 7 1 8-3z" fill="#8e8e8e"/></svg>
<svg class="b" style="left:1538px;top:399px;" width="13" height="13" viewBox="0 0 13 13"><path d="M6.500 1v11M1 6.500h11" stroke="#8e8e8e" stroke-width="1.100"/><path d="M6.500 0l-2.300 2.800h4.600zM6.500 13l-2.300-2.800h4.600zM0 6.500l2.800-2.300v4.600zM13 6.500l-2.800-2.300v4.600z" fill="#8e8e8e"/></svg>
<svg class="b" style="left:1561px;top:399px;" width="11" height="13" viewBox="0 0 11 13"><path d="M2.500 6v-2.500a3 3 0 0 1 6 0v2.500" fill="none" stroke="#8e8e8e" stroke-width="1.500"/><rect x=".500" y="6" width="10" height="6.500" rx="1" fill="#8e8e8e"/><rect x="5" y="8" width="1.200" height="2.500" fill="#535353"/></svg>
<span id="t44" class="t " style="left:1600.5px;top:397px;font-size:10px;line-height:15px;color:#b4b4b4;transform:scaleX(0.9060);">Fill:</span>
<div class="b " style="left:1620px;top:396px;width:53px;height:18px;background:#4a4a4a;border:1px solid #424242;"></div>
<div class="b " style="left:1655px;top:397px;width:17px;height:16px;background:#585858;border-left:1px solid #424242;"></div>
<svg class="b" style="left:1661px;top:403px;" width="7" height="4" viewBox="0 0 7 4"><path d="M0 0h6l-3 3.500z" fill="#9a9a9a"/></svg>
<div class="b " style="left:1456px;top:420px;width:220px;height:610px;background:#474747;border-top:1px solid #383838;"></div>
<div class="b " style="left:1663px;top:421px;width:13px;height:609px;background:#404040;border-left:1px solid #3c3c3c;"></div>
<div class="b " style="left:1456px;top:1030px;width:220px;height:18px;background:#535353;border-top:1px solid #3a3a3a;"></div>
<svg class="b" style="left:1475px;top:1036px;" width="15" height="10" viewBox="0 0 15 10"><rect x="1" y="2" width="8" height="6" rx="3" fill="none" stroke="#858585" stroke-width="1.500"/><rect x="6" y="2" width="8" height="6" rx="3" fill="none" stroke="#858585" stroke-width="1.500"/></svg>
<span id="t45" class="t " style="left:1502px;top:1031px;font-size:15px;line-height:18px;color:#858585;font-style:italic;font-family:'Liberation Serif',serif;">fx</span>
<svg class="b" style="left:1530px;top:1036px;" width="14" height="11" viewBox="0 0 14 11"><rect x="0" y="0" width="13.500" height="10" fill="#858585"/><circle cx="6.700" cy="5.200" r="2.600" fill="#535353"/></svg>
<svg class="b" style="left:1557px;top:1035px;" width="12" height="12" viewBox="0 0 12 12"><circle cx="6" cy="6" r="4.800" fill="none" stroke="#858585" stroke-width="1.300"/><path d="M9.400 2.600a4.800 4.800 0 0 1-6.800 6.800z" fill="#858585"/></svg>
<svg class="b" style="left:1583px;top:1035px;" width="14" height="12" viewBox="0 0 14 12"><path d="M.500 1h5l1.500 1.800h6v8.200h-12.500z" fill="#858585"/></svg>
<svg class="b" style="left:1611px;top:1036px;" width="13" height="11" viewBox="0 0 13 11"><path d="M1.500 .500h11v10h-6l-5-5z" fill="#858585"/><path d="M1.500 5.500h5v5z" fill="#535353" stroke="#858585" stroke-width=".800"/></svg>
<svg class="b" style="left:1638px;top:1035px;" width="12" height="13" viewBox="0 0 12 13"><path d="M0 3h12M4 3c0-3 4-3 4 0" fill="none" stroke="#858585" stroke-width="1.300"/><path d="M1.200 4.500h9.600l-.800 8h-8z" fill="#858585"/><path d="M4 5.500v6M6 5.500v6M8 5.500v6" stroke="#535353" stroke-width=".800"/></svg>
<div class="b " style="left:586px;top:640px;width:507px;height:79px;background:#eeeeee;border:1px solid #b4d3ec;border-right:2px solid #b0d8f4;border-top:none;box-shadow:0 1px 0 #1a2c3a, 1px 0 0 #1a2c3a, -1px 0 0 #10181e;"></div>
<div class="b " style="left:603px;top:640px;width:382px;height:62px;border:1px solid #8c8c8c;border-top:none;box-shadow:1px 1px 0 #fff;"></div>
<div class="b " style="left:620px;top:676px;width:13px;height:13px;background:linear-gradient(135deg,#dcdcdc,#fff);border:1px solid #6e6e6e;box-shadow:inset 0 0 0 1px #f4f4f4;"></div>
<span id="t46" class="t " style="left:636.5px;top:675px;font-size:12px;line-height:16px;color:#000;transform:scaleX(1.0224);">Create Smart Object after Loading Layers</span>
<div class="b " style="left:543px;top:217px;width:1px;height:449px;background:#0c0c0c;"></div>
<div class="b " style="left:1134px;top:191px;width:1px;height:475px;background:#0c0c0c;"></div>
<div class="b " style="left:543px;top:665px;width:592px;height:1px;background:#0c0c0c;"></div>
<div class="b " style="left:544px;top:188px;width:590px;height:477px;border-radius:4px 4px 0 0;background:linear-gradient(#9cb8da 0px,#a9c3e1 12px,#bfd3ea 28px,#b9d0e9 30px,#b9d0e9 100%);box-shadow:inset 1px 1px 0 #f2f7fc,inset -1px 0 0 #8ad6f8,inset -2px 0 0 #a6d4f0,inset 0 -1px 0 #8ccff0;"></div>
<span id="t47" class="t " style="left:555.5px;top:198px;font-size:12px;line-height:16px;color:#000;transform:scaleX(0.9741);">Open</span>
<div class="b " style="left:1094px;top:197px;width:31px;height:17px;border:1px solid #3c1a1c;border-radius:3px;background:linear-gradient(#e3a99d 0%,#d38878 45%,#c24a34 50%,#cc6a50 100%);box-shadow:inset 0 0 0 1px rgba(255,255,255,.35);"></div>
<svg class="b" style="left:1103px;top:199px;" width="14" height="13" viewBox="0 0 14 13"><path d="M3 3l7.500 6.500M10.500 3l-7.500 6.500" stroke="#6a4040" stroke-width="4.200" stroke-linecap="square"/><path d="M3 3l7.500 6.500M10.500 3l-7.500 6.500" stroke="#fff" stroke-width="2.800" stroke-linecap="square"/></svg>
<div class="b " style="left:551px;top:217px;width:576px;height:441px;background:#f0f0f0;"></div>
<svg class="b" style="left:1116px;top:647px;" width="10" height="10" viewBox="0 0 10 10"><g fill="#b8b8b8"><rect x="7" y="1" width="2" height="2"/><rect x="4" y="4" width="2" height="2"/><rect x="7" y="4" width="2" height="2"/><rect x="1" y="7" width="2" height="2"/><rect x="4" y="7" width="2" height="2"/><rect x="7" y="7" width="2" height="2"/></g></svg>
<span id="t48" class="t " style="left:610.5px;top:234px;font-size:12px;line-height:15px;color:#000;transform:scaleX(0.8946);">Look in:</span>
<div class="b " style="left:656px;top:231px;width:260px;height:23px;background:#fff;border:1px solid #e2e3ea;border-top-color:#abadb3;border-radius:2px;"></div>
<svg class="b" style="left:662px;top:234px;" width="14" height="17" viewBox="0 0 14 17"><defs><linearGradient id="fo" x1="0" x2="1"><stop offset="0" stop-color="#f6e9a6"/><stop offset=".550" stop-color="#e9cf6a"/><stop offset=".600" stop-color="#fbf3c4"/><stop offset="1" stop-color="#e6c95c"/></linearGradient></defs><path d="M1 2.500l5-1.500 1.500 1 5-1v14l-5 1.500-1.500-1-5 1z" fill="url(#fo)" stroke="#d8bd5a" stroke-width=".600"/><path d="M11.500 9v3" stroke="#58a678" stroke-width="1.400"/></svg>
<span id="t49" class="t " style="left:681.5px;top:235.5px;font-size:12px;line-height:15px;color:#000;transform:scaleX(0.8721);">jpeg-exports</span>
<svg class="b" style="left:904px;top:241px;" width="9" height="5" viewBox="0 0 9 5"><path d="M.500 .500h8l-4 4z" fill="#000"/></svg>
<svg class="b" style="left:931px;top:233px;" width="18" height="18" viewBox="0 0 18 18"><defs><radialGradient id="bk" cx=".5" cy=".25" r=".8"><stop offset="0" stop-color="#8fd0f4"/><stop offset=".450" stop-color="#2b7fc4"/><stop offset="1" stop-color="#0c3f86"/></radialGradient></defs><circle cx="9" cy="9" r="8" fill="url(#bk)" stroke="#2a4f80" stroke-width=".800"/><path d="M4 9l4.500-4v2.600h5.500v2.800h-5.500v2.600z" fill="#fff"/><path d="M2.500 12.500a7.500 7.500 0 0 0 13 0a8 4 0 0 1-13 0z" fill="#5fd0f0" fill-opacity=".5"/></svg>
<svg class="b" style="left:954px;top:233px;" width="17" height="18" viewBox="0 0 17 18"><path d="M1.500 6h5l1 1.500h5v8.500h-11z" fill="#f3dc8c" stroke="#d2b052" stroke-width=".700"/><path d="M1.500 16l2-7h11l-2 7z" fill="#fbedb0" stroke="#d2b052" stroke-width=".700"/><path d="M6.500 14c3-1 4.500-4 4-7.500h-2.700l4.200-5.500 3.500 5.500h-2.300c.300 4-2 7-6.700 7.500z" fill="#3cae3c" stroke="#1d7a24" stroke-width=".700"/></svg>
<svg class="b" style="left:978px;top:234px;" width="18" height="16" viewBox="0 0 18 16"><path d="M1.500 4h4.500l1 1.500h6v9h-11.500z" fill="#f3dc8c" stroke="#d8b85c" stroke-width=".700"/><path d="M1.500 14.500l2.300-7h11l-2.300 7z" fill="#fbedb0" stroke="#d8b85c" stroke-width=".700"/><path d="M13.500 0l.800 2 2-.800-.800 2 2 .800-2 .800.800 2-2-.800-.800 2-.800-2-2 .800.800-2-2-.800 2-.800-.800-2 2 .800z" fill="#f28c28"/><circle cx="13.500" cy="4" r="1.500" fill="#fff3c0"/></svg>
<svg class="b" style="left:1001px;top:234px;" width="17" height="16" viewBox="0 0 17 16"><rect x=".700" y=".700" width="15" height="14" rx="1" fill="#fff" stroke="#2f6cc0" stroke-width="1.400"/><rect x=".700" y=".700" width="15" height="3" fill="#2f6cc0"/><rect x="3" y="5.500" width="2.500" height="2.500" fill="#8d8fb0"/><rect x="7" y="5.500" width="2.500" height="2.500" fill="#1c3f8e"/><rect x="11" y="5.500" width="2.500" height="2.500" fill="#3d7c3d"/><rect x="3" y="10" width="2.500" height="2.500" fill="#c0705a"/><rect x="7" y="10" width="2.500" height="2.500" fill="#10307e"/><rect x="11" y="10" width="2.500" height="2.500" fill="#c69a4c"/></svg>
<svg class="b" style="left:1019px;top:240px;" width="8" height="5" viewBox="0 0 8 5"><path d="M.300 .500h7l-3.500 3.800z" fill="#1a1a1a"/></svg>
<svg class="b" style="left:1085px;top:235px;" width="17" height="15" viewBox="0 0 17 15"><path d="M1 3.500c0-2 1-2.500 2-2.500h3c1 0 1.500 1 2 2.500h7.500v10h-14.500z" fill="#f4f17a" stroke="#000" stroke-width="1.100"/><path d="M8.300 5.500v6M5.300 8.500h6M6.200 6.400l4.200 4.200M10.400 6.400l-4.200 4.200" stroke="#000" stroke-width="1"/></svg>
<div class="b " style="left:563px;top:260px;width:87px;height:338px;background:#f4f4f4;box-shadow:0 0 2px #f4f4f4;"></div>
<span id="t50" class="t " style="left:570px;top:298.5px;font-size:12px;line-height:16px;color:#000;transform:scaleX(0.9254);">Recent Places</span>
<span id="t51" class="t " style="left:585px;top:373.5px;font-size:12px;line-height:16px;color:#000;transform:scaleX(0.9675);">Desktop</span>
<span id="t52" class="t " style="left:579.25px;top:449px;font-size:12px;line-height:16px;color:#000;transform:scaleX(1.0268);">Computer</span>
<span id="t53" class="t " style="left:564px;top:464px;font-size:12px;line-height:16px;color:#000;transform:scaleX(0.9149);">[JF65A-R3043-...</span>
<span id="t54" class="t " style="left:584.25px;top:524px;font-size:12px;line-height:16px;color:#000;transform:scaleX(1.0246);">Network</span>
<svg class="b" style="left:589px;top:267px;" width="32" height="32" viewBox="0 0 32 32"><defs><linearGradient id="ph" x1="0" y1="0" x2="0" y2="1"><stop offset="0" stop-color="#bfe4f6"/><stop offset=".550" stop-color="#3f8fd0"/><stop offset=".600" stop-color="#2c6a3c"/><stop offset="1" stop-color="#5c9a5c"/></linearGradient></defs>
<circle cx="9.500" cy="10" r="8.500" fill="#dfe3e8" stroke="#a8aeb6" stroke-width="1"/><path d="M9.500 3.500v6.500h5" fill="none" stroke="#8a9098" stroke-width="1.200"/>
<path d="M14 5l11-1.500v16l-11 2z" fill="#f4f4f4" stroke="#b8b8b8" stroke-width=".700"/><path d="M16 8l7-1M16 10.500l7-1" stroke="#a8b4c4" stroke-width=".800"/><rect x="19" y="11" width="5" height="4" fill="#5a9ad0"/>
<path d="M7 14l12-2.500v12l-12 3z" fill="url(#ph)" stroke="#e8eef4" stroke-width="1"/>
<path d="M2 22l6-4v6l13-3v-4l9 2.500-13 9.500z" fill="#d4d6d8" stroke="#9a9ea2" stroke-width=".800"/><path d="M2 22l15 7.500 13-9.500v3l-13 9-15-7z" fill="#a4a8ac"/></svg>
<svg class="b" style="left:590px;top:345px;" width="32" height="25" viewBox="0 0 32 25"><defs><linearGradient id="dk" x1="0" y1="0" x2="1" y2="1"><stop offset="0" stop-color="#2f6fd8"/><stop offset=".450" stop-color="#5aa0ee"/><stop offset=".500" stop-color="#3a80e0"/><stop offset="1" stop-color="#2a62c8"/></linearGradient></defs>
<rect x=".500" y=".500" width="30.500" height="23.500" fill="#c8ccd4" stroke="#a8acb4"/><rect x="2" y="2" width="27.500" height="20.500" fill="url(#dk)"/><rect x="2" y="19" width="27.500" height="3.500" fill="#1c2c48"/><rect x="2" y="19" width="27.500" height="1" fill="#5a78a8"/><circle cx="5" cy="20.800" r="1.200" fill="#d8c848"/></svg>
<svg class="b" style="left:590px;top:418px;" width="32" height="29" viewBox="0 0 32 29"><path d="M1 5l5-2 2 .500v17l-5 1.500-2-1z" fill="#d0d4d8" stroke="#8c9298" stroke-width=".700"/><path d="M1 5l2 .800v16.200" fill="none" stroke="#a8aeb4" stroke-width=".700"/><circle cx="2" cy="7.500" r=".700" fill="#4ac04a"/><g transform="translate(7.5 0) scale(1.25)"><path d="M1 1.500l17-1.500 1 .800-1 14.700-16.500 1.500-1.500-1z" fill="#e6e8ec" stroke="#a0a6ae" stroke-width=".700"/><path d="M2.500 2.800l14.500-1.300-.900 12.500-13.600 1.300z" fill="#0d25b0"/><path d="M2.500 2.800l8-.700-3.500 12.700-4.500.500z" fill="#2a50e0"/><path d="M10.500 2.100l6.500-.600-.400 6z" fill="#3a66e8" fill-opacity=".700"/><path d="M7 16.500h6l.5 2.500h-7z" fill="#c8ccd0"/><ellipse cx="10" cy="20.500" rx="6.500" ry="2.300" fill="#e0e2e6" stroke="#b4b8bc" stroke-width=".600"/></g></svg>
<svg class="b" style="left:590px;top:490px;" width="33" height="33" viewBox="0 0 33 33"><defs><radialGradient id="gl" cx=".35" cy=".3" r=".8"><stop offset="0" stop-color="#9fe0f8"/><stop offset=".500" stop-color="#2f8fd8"/><stop offset="1" stop-color="#0c4a9c"/></radialGradient></defs>
<circle cx="12" cy="13" r="11.500" fill="url(#gl)"/><path d="M3 8c3-4 7-6 10-6-1 3-4 4-5 7s1 5-1 8-4 2-5 0c-1-3-.500-6 1-9z" fill="#4cb848"/><path d="M15 3c3 0 6 2 7.500 5-2 1-4 0-5-2z" fill="#4cb848"/><path d="M6 21c2-1 4-1 5 1l-1 2.500c-2-.500-3-1.500-4-3.500z" fill="#3ca03c"/><g transform="translate(10.5 6.5) scale(1.15)"><path d="M1 1.500l17-1.500 1 .800-1 14.700-16.500 1.500-1.500-1z" fill="#e6e8ec" stroke="#a0a6ae" stroke-width=".700"/><path d="M2.500 2.800l14.500-1.300-.900 12.500-13.600 1.300z" fill="#0d25b0"/><path d="M2.500 2.800l8-.700-3.500 12.700-4.500.500z" fill="#2a50e0"/><path d="M10.500 2.100l6.500-.600-.400 6z" fill="#3a66e8" fill-opacity=".700"/><path d="M7 16.500h6l.5 2.500h-7z" fill="#c8ccd0"/><ellipse cx="10" cy="20.500" rx="6.500" ry="2.300" fill="#e0e2e6" stroke="#b4b8bc" stroke-width=".600"/></g></svg>
<div class="b " style="left:656px;top:260px;width:434px;height:267px;background:#fff;overflow:hidden;"></div>
<div class="b " style="left:656px;top:260px;width:434px;height:23px;background:linear-gradient(#fff 0,#fff 45%,#f2f3f5 50%,#f7f8fa 100%);border-bottom:1px solid #d5d5d5;"></div>
<div class="b " style="left:656px;top:260px;width:272px;height:23px;background:linear-gradient(#f2f9fd 0,#e6f3fb 45%,#d9ecf8 50%,#e1f0fa 100%);border:1px solid #9acbe6;border-top:none;border-left-color:#c0dcef;"></div>
<div class="b " style="left:1047px;top:260px;width:1px;height:22px;background:linear-gradient(#fff,#e0e4ea);"></div>
<svg class="b" style="left:788px;top:261px;" width="8" height="5" viewBox="0 0 8 5"><path d="M.500 4l3.500-3.500 3.500 3.500z" fill="#9cc4e0" stroke="#4c7ca8" stroke-width=".800"/></svg>
<span id="t55" class="t " style="left:662.5px;top:264px;font-size:12px;line-height:16px;color:#000;transform:scaleX(1.0026);">Name</span>
<span id="t56" class="t " style="left:934.5px;top:264px;font-size:12px;line-height:16px;color:#000;transform:scaleX(1.0075);">Date modified</span>
<span id="t57" class="t " style="left:1054.5px;top:264px;font-size:12px;line-height:16px;color:#000;transform:scaleX(0.9840);">Type</span>
<div class="b " style="left:656px;top:260px;width:434px;height:267px;overflow:hidden;"><svg width="0" height="0" style="position:absolute"><defs><linearGradient id="sky" x1="0" y1="0" x2="1" y2="1"><stop offset="0" stop-color="#2f80cc"/><stop offset=".6" stop-color="#9ad4f0"/><stop offset="1" stop-color="#c8ecf8"/></linearGradient></defs></svg><div class="b " style="left:4px;top:24.5px;width:440px;height:18.5px;border:1px solid #d2d2d2;border-radius:3px;background:linear-gradient(#fbfbfb 0,#efefef 55%,#dfdfdf 100%);box-shadow:inset 0 0 0 1px rgba(255,255,255,.8);"></div><div class="b " style="left:271.5px;top:25px;width:1px;height:18px;background:#ececec;"></div><div class="b " style="left:391.5px;top:25px;width:1px;height:18px;background:#ececec;"></div><svg class="b" style="left:8px;top:27px;" width="16" height="14" viewBox="0 0 16 14"><rect x=".500" y=".500" width="15" height="13" fill="#fff" stroke="#9a9ea4"/><rect x="2" y="2" width="12" height="10" fill="url(#sky)"/><path d="M2 6.500c2-1.500 3-3.500 6-3.500s4 1 6 .500v4.500h-12z" fill="#e6f4fb"/><path d="M2 5.500c2 .500 3.500 2 5.500 3s4.500 .800 6.500 1.200v2.300h-12z" fill="#2c6e58"/><path d="M2 10.200c4 .300 8 .200 12 0v1.800h-12z" fill="#3a86bc"/></svg><span id="t58" class="t " style="left:26.5px;top:26px;font-size:12px;line-height:16px;color:#000;transform:scaleX(0.9044);">DSC_0001.jpg</span><span id="t59" class="t " style="left:277.5px;top:26px;font-size:12px;line-height:16px;color:#000;transform:scaleX(0.9484);">05/02/2010 21:36</span><span id="t60" class="t " style="left:398px;top:26px;font-size:12px;line-height:16px;color:#000;transform:scaleX(0.8997);">JPEG image</span><div class="b " style="left:4px;top:43.5px;width:440px;height:18.5px;border:1px solid #d2d2d2;border-radius:3px;background:linear-gradient(#fbfbfb 0,#efefef 55%,#dfdfdf 100%);box-shadow:inset 0 0 0 1px rgba(255,255,255,.8);"></div><div class="b " style="left:271.5px;top:44px;width:1px;height:18px;background:#ececec;"></div><div class="b " style="left:391.5px;top:44px;width:1px;height:18px;background:#ececec;"></div><svg class="b" style="left:8px;top:46px;" width="16" height="14" viewBox="0 0 16 14"><rect x=".500" y=".500" width="15" height="13" fill="#fff" stroke="#9a9ea4"/><rect x="2" y="2" width="12" height="10" fill="url(#sky)"/><path d="M2 6.500c2-1.500 3-3.500 6-3.500s4 1 6 .500v4.500h-12z" fill="#e6f4fb"/><path d="M2 5.500c2 .500 3.500 2 5.500 3s4.500 .800 6.500 1.200v2.300h-12z" fill="#2c6e58"/><path d="M2 10.200c4 .300 8 .200 12 0v1.800h-12z" fill="#3a86bc"/></svg><span id="t61" class="t " style="left:26.5px;top:45px;font-size:12px;line-height:16px;color:#000;transform:scaleX(0.9044);">DSC_0003.jpg</span><span id="t62" class="t " style="left:277.5px;top:45px;font-size:12px;line-height:16px;color:#000;transform:scaleX(0.9484);">05/02/2010 21:44</span><span id="t63" class="t " style="left:398px;top:45px;font-size:12px;line-height:16px;color:#000;transform:scaleX(0.8997);">JPEG image</span><div class="b " style="left:4px;top:62.5px;width:440px;height:18.5px;border:1px solid #d2d2d2;border-radius:3px;background:linear-gradient(#fbfbfb 0,#efefef 55%,#dfdfdf 100%);box-shadow:inset 0 0 0 1px rgba(255,255,255,.8);"></div><div class="b " style="left:271.5px;top:63px;width:1px;height:18px;background:#ececec;"></div><div class="b " style="left:391.5px;top:63px;width:1px;height:18px;background:#ececec;"></div><svg class="b" style="left:8px;top:65px;" width="16" height="14" viewBox="0 0 16 14"><rect x=".500" y=".500" width="15" height="13" fill="#fff" stroke="#9a9ea4"/><rect x="2" y="2" width="12" height="10" fill="url(#sky)"/><path d="M2 6.500c2-1.500 3-3.500 6-3.500s4 1 6 .500v4.500h-12z" fill="#e6f4fb"/><path d="M2 5.500c2 .500 3.500 2 5.500 3s4.500 .800 6.500 1.200v2.300h-12z" fill="#2c6e58"/><path d="M2 10.200c4 .300 8 .200 12 0v1.800h-12z" fill="#3a86bc"/></svg><span id="t64" class="t " style="left:26.5px;top:64px;font-size:12px;line-height:16px;color:#000;transform:scaleX(0.9044);">DSC_0004.jpg</span><span id="t65" class="t " style="left:277.5px;top:64px;font-size:12px;line-height:16px;color:#000;transform:scaleX(0.9484);">05/02/2010 21:44</span><span id="t66" class="t " style="left:398px;top:64px;font-size:12px;line-height:16px;color:#000;transform:scaleX(0.8997);">JPEG image</span><div class="b " style="left:4px;top:81.5px;width:440px;height:18.5px;border:1px solid #d2d2d2;border-radius:3px;background:linear-gradient(#fbfbfb 0,#efefef 55%,#dfdfdf 100%);box-shadow:inset 0 0 0 1px rgba(255,255,255,.8);"></div><div class="b " style="left:271.5px;top:82px;width:1px;height:18px;background:#ececec;"></div><div class="b " style="left:391.5px;top:82px;width:1px;height:18px;background:#ececec;"></div><svg class="b" style="left:8px;top:84px;" width="16" height="14" viewBox="0 0 16 14"><rect x=".500" y=".500" width="15" height="13" fill="#fff" stroke="#9a9ea4"/><rect x="2" y="2" width="12" height="10" fill="url(#sky)"/><path d="M2 6.500c2-1.500 3-3.500 6-3.500s4 1 6 .500v4.500h-12z" fill="#e6f4fb"/><path d="M2 5.500c2 .500 3.500 2 5.500 3s4.500 .800 6.500 1.200v2.300h-12z" fill="#2c6e58"/><path d="M2 10.200c4 .300 8 .200 12 0v1.800h-12z" fill="#3a86bc"/></svg><span id="t67" class="t " style="left:26.5px;top:83px;font-size:12px;line-height:16px;color:#000;transform:scaleX(0.9044);">DSC_0005.jpg</span><span id="t68" class="t " style="left:277.5px;top:83px;font-size:12px;line-height:16px;color:#000;transform:scaleX(0.9484);">05/02/2010 21:44</span><span id="t69" class="t " style="left:398px;top:83px;font-size:12px;line-height:16px;color:#000;transform:scaleX(0.8997);">JPEG image</span><div class="b " style="left:4px;top:100.5px;width:440px;height:18.5px;border:1px solid #d2d2d2;border-radius:3px;background:linear-gradient(#fbfbfb 0,#efefef 55%,#dfdfdf 100%);box-shadow:inset 0 0 0 1px rgba(255,255,255,.8);"></div><div class="b " style="left:271.5px;top:101px;width:1px;height:18px;background:#ececec;"></div><div class="b " style="left:391.5px;top:101px;width:1px;height:18px;background:#ececec;"></div><svg class="b" style="left:8px;top:103px;" width="16" height="14" viewBox="0 0 16 14"><rect x=".500" y=".500" width="15" height="13" fill="#fff" stroke="#9a9ea4"/><rect x="2" y="2" width="12" height="10" fill="url(#sky)"/><path d="M2 6.500c2-1.500 3-3.500 6-3.500s4 1 6 .500v4.500h-12z" fill="#e6f4fb"/><path d="M2 5.500c2 .500 3.500 2 5.500 3s4.500 .800 6.500 1.200v2.300h-12z" fill="#2c6e58"/><path d="M2 10.200c4 .300 8 .200 12 0v1.800h-12z" fill="#3a86bc"/></svg><span id="t70" class="t " style="left:26.5px;top:102px;font-size:12px;line-height:16px;color:#000;transform:scaleX(0.9044);">DSC_0006.jpg</span><span id="t71" class="t " style="left:277.5px;top:102px;font-size:12px;line-height:16px;color:#000;transform:scaleX(0.9484);">05/02/2010 21:44</span><span id="t72" class="t " style="left:398px;top:102px;font-size:12px;line-height:16px;color:#000;transform:scaleX(0.8997);">JPEG image</span><div class="b " style="left:4px;top:119.5px;width:440px;height:18.5px;border:1px solid #d2d2d2;border-radius:3px;background:linear-gradient(#fbfbfb 0,#efefef 55%,#dfdfdf 100%);box-shadow:inset 0 0 0 1px rgba(255,255,255,.8);"></div><div class="b " style="left:271.5px;top:120px;width:1px;height:18px;background:#ececec;"></div><div class="b " style="left:391.5px;top:120px;width:1px;height:18px;background:#ececec;"></div><svg class="b" style="left:8px;top:122px;" width="16" height="14" viewBox="0 0 16 14"><rect x=".500" y=".500" width="15" height="13" fill="#fff" stroke="#9a9ea4"/><rect x="2" y="2" width="12" height="10" fill="url(#sky)"/><path d="M2 6.500c2-1.500 3-3.500 6-3.500s4 1 6 .500v4.500h-12z" fill="#e6f4fb"/><path d="M2 5.500c2 .500 3.500 2 5.500 3s4.500 .800 6.500 1.200v2.300h-12z" fill="#2c6e58"/><path d="M2 10.200c4 .300 8 .200 12 0v1.800h-12z" fill="#3a86bc"/></svg><span id="t73" class="t " style="left:26.5px;top:121px;font-size:12px;line-height:16px;color:#000;transform:scaleX(0.9044);">DSC_0008.jpg</span><span id="t74" class="t " style="left:277.5px;top:121px;font-size:12px;line-height:16px;color:#000;transform:scaleX(0.9484);">05/02/2010 21:44</span><span id="t75" class="t " style="left:398px;top:121px;font-size:12px;line-height:16px;color:#000;transform:scaleX(0.8997);">JPEG image</span><div class="b " style="left:4px;top:138.5px;width:440px;height:18.5px;border:1px solid #d2d2d2;border-radius:3px;background:linear-gradient(#fbfbfb 0,#efefef 55%,#dfdfdf 100%);box-shadow:inset 0 0 0 1px rgba(255,255,255,.8);"></div><div class="b " style="left:271.5px;top:139px;width:1px;height:18px;background:#ececec;"></div><div class="b " style="left:391.5px;top:139px;width:1px;height:18px;background:#ececec;"></div><svg class="b" style="left:8px;top:141px;" width="16" height="14" viewBox="0 0 16 14"><rect x=".500" y=".500" width="15" height="13" fill="#fff" stroke="#9a9ea4"/><rect x="2" y="2" width="12" height="10" fill="url(#sky)"/><path d="M2 6.500c2-1.500 3-3.500 6-3.500s4 1 6 .500v4.500h-12z" fill="#e6f4fb"/><path d="M2 5.500c2 .500 3.500 2 5.500 3s4.500 .800 6.500 1.200v2.300h-12z" fill="#2c6e58"/><path d="M2 10.200c4 .300 8 .200 12 0v1.800h-12z" fill="#3a86bc"/></svg><span id="t76" class="t " style="left:26.5px;top:140px;font-size:12px;line-height:16px;color:#000;transform:scaleX(0.9044);">DSC_0009.jpg</span><span id="t77" class="t " style="left:277.5px;top:140px;font-size:12px;line-height:16px;color:#000;transform:scaleX(0.9484);">05/02/2010 21:44</span><span id="t78" class="t " style="left:398px;top:140px;font-size:12px;line-height:16px;color:#000;transform:scaleX(0.8997);">JPEG image</span><div class="b " style="left:4px;top:157.5px;width:440px;height:18.5px;border:1px solid #d2d2d2;border-radius:3px;background:linear-gradient(#fbfbfb 0,#efefef 55%,#dfdfdf 100%);box-shadow:inset 0 0 0 1px rgba(255,255,255,.8);"></div><div class="b " style="left:271.5px;top:158px;width:1px;height:18px;background:#ececec;"></div><div class="b " style="left:391.5px;top:158px;width:1px;height:18px;background:#ececec;"></div><svg class="b" style="left:8px;top:160px;" width="16" height="14" viewBox="0 0 16 14"><rect x=".500" y=".500" width="15" height="13" fill="#fff" stroke="#9a9ea4"/><rect x="2" y="2" width="12" height="10" fill="url(#sky)"/><path d="M2 6.500c2-1.500 3-3.500 6-3.500s4 1 6 .500v4.500h-12z" fill="#e6f4fb"/><path d="M2 5.500c2 .500 3.500 2 5.500 3s4.500 .800 6.500 1.200v2.300h-12z" fill="#2c6e58"/><path d="M2 10.200c4 .300 8 .200 12 0v1.800h-12z" fill="#3a86bc"/></svg><span id="t79" class="t " style="left:26.5px;top:159px;font-size:12px;line-height:16px;color:#000;transform:scaleX(0.9044);">DSC_0010.jpg</span><span id="t80" class="t " style="left:277.5px;top:159px;font-size:12px;line-height:16px;color:#000;transform:scaleX(0.9484);">05/02/2010 21:44</span><span id="t81" class="t " style="left:398px;top:159px;font-size:12px;line-height:16px;color:#000;transform:scaleX(0.8997);">JPEG image</span><div class="b " style="left:4px;top:176.5px;width:440px;height:18.5px;border:1px solid #d2d2d2;border-radius:3px;background:linear-gradient(#fbfbfb 0,#efefef 55%,#dfdfdf 100%);box-shadow:inset 0 0 0 1px rgba(255,255,255,.8);"></div><div class="b " style="left:271.5px;top:177px;width:1px;height:18px;background:#ececec;"></div><div class="b " style="left:391.5px;top:177px;width:1px;height:18px;background:#ececec;"></div><svg class="b" style="left:8px;top:179px;" width="16" height="14" viewBox="0 0 16 14"><rect x=".500" y=".500" width="15" height="13" fill="#fff" stroke="#9a9ea4"/><rect x="2" y="2" width="12" height="10" fill="url(#sky)"/><path d="M2 6.500c2-1.500 3-3.500 6-3.500s4 1 6 .500v4.500h-12z" fill="#e6f4fb"/><path d="M2 5.500c2 .500 3.500 2 5.500 3s4.500 .800 6.500 1.200v2.300h-12z" fill="#2c6e58"/><path d="M2 10.200c4 .300 8 .200 12 0v1.800h-12z" fill="#3a86bc"/></svg><span id="t82" class="t " style="left:26.5px;top:178px;font-size:12px;line-height:16px;color:#000;transform:scaleX(0.9148);">DSC_0011.jpg</span><span id="t83" class="t " style="left:277.5px;top:178px;font-size:12px;line-height:16px;color:#000;transform:scaleX(0.9484);">05/02/2010 21:45</span><span id="t84" class="t " style="left:398px;top:178px;font-size:12px;line-height:16px;color:#000;transform:scaleX(0.8997);">JPEG image</span><div class="b " style="left:4px;top:195.5px;width:440px;height:18.5px;border:1px solid #d2d2d2;border-radius:3px;background:linear-gradient(#fbfbfb 0,#efefef 55%,#dfdfdf 100%);box-shadow:inset 0 0 0 1px rgba(255,255,255,.8);"></div><div class="b " style="left:271.5px;top:196px;width:1px;height:18px;background:#ececec;"></div><div class="b " style="left:391.5px;top:196px;width:1px;height:18px;background:#ececec;"></div><svg class="b" style="left:8px;top:198px;" width="16" height="14" viewBox="0 0 16 14"><rect x=".500" y=".500" width="15" height="13" fill="#fff" stroke="#9a9ea4"/><rect x="2" y="2" width="12" height="10" fill="url(#sky)"/><path d="M2 6.500c2-1.500 3-3.500 6-3.500s4 1 6 .500v4.500h-12z" fill="#e6f4fb"/><path d="M2 5.500c2 .500 3.500 2 5.500 3s4.500 .800 6.500 1.200v2.300h-12z" fill="#2c6e58"/><path d="M2 10.200c4 .300 8 .200 12 0v1.800h-12z" fill="#3a86bc"/></svg><span id="t85" class="t " style="left:26.5px;top:197px;font-size:12px;line-height:16px;color:#000;transform:scaleX(0.9044);">DSC_0012.jpg</span><span id="t86" class="t " style="left:277.5px;top:197px;font-size:12px;line-height:16px;color:#000;transform:scaleX(0.9484);">05/02/2010 21:45</span><span id="t87" class="t " style="left:398px;top:197px;font-size:12px;line-height:16px;color:#000;transform:scaleX(0.8997);">JPEG image</span><div class="b " style="left:4px;top:214.5px;width:440px;height:18.5px;border:1px solid #d2d2d2;border-radius:3px;background:linear-gradient(#fbfbfb 0,#efefef 55%,#dfdfdf 100%);box-shadow:inset 0 0 0 1px rgba(255,255,255,.8);"></div><div class="b " style="left:271.5px;top:215px;width:1px;height:18px;background:#ececec;"></div><div class="b " style="left:391.5px;top:215px;width:1px;height:18px;background:#ececec;"></div><svg class="b" style="left:8px;top:217px;" width="16" height="14" viewBox="0 0 16 14"><rect x=".500" y=".500" width="15" height="13" fill="#fff" stroke="#9a9ea4"/><rect x="2" y="2" width="12" height="10" fill="url(#sky)"/><path d="M2 6.500c2-1.500 3-3.500 6-3.500s4 1 6 .500v4.500h-12z" fill="#e6f4fb"/><path d="M2 5.500c2 .500 3.500 2 5.500 3s4.500 .800 6.500 1.200v2.300h-12z" fill="#2c6e58"/><path d="M2 10.200c4 .300 8 .200 12 0v1.800h-12z" fill="#3a86bc"/></svg><span id="t88" class="t " style="left:26.5px;top:216px;font-size:12px;line-height:16px;color:#000;transform:scaleX(0.9044);">DSC_0013.jpg</span><span id="t89" class="t " style="left:277.5px;top:216px;font-size:12px;line-height:16px;color:#000;transform:scaleX(0.9484);">05/02/2010 21:45</span><span id="t90" class="t " style="left:398px;top:216px;font-size:12px;line-height:16px;color:#000;transform:scaleX(0.8997);">JPEG image</span><div class="b " style="left:4px;top:233.5px;width:440px;height:18.5px;border:1px solid #d2d2d2;border-radius:3px;background:linear-gradient(#fbfbfb 0,#efefef 55%,#dfdfdf 100%);box-shadow:inset 0 0 0 1px rgba(255,255,255,.8);"></div><div class="b " style="left:271.5px;top:234px;width:1px;height:18px;background:#ececec;"></div><div class="b " style="left:391.5px;top:234px;width:1px;height:18px;background:#ececec;"></div><svg class="b" style="left:8px;top:236px;" width="16" height="14" viewBox="0 0 16 14"><rect x=".500" y=".500" width="15" height="13" fill="#fff" stroke="#9a9ea4"/><rect x="2" y="2" width="12" height="10" fill="url(#sky)"/><path d="M2 6.500c2-1.500 3-3.500 6-3.500s4 1 6 .500v4.500h-12z" fill="#e6f4fb"/><path d="M2 5.500c2 .500 3.500 2 5.500 3s4.500 .800 6.500 1.200v2.300h-12z" fill="#2c6e58"/><path d="M2 10.200c4 .300 8 .200 12 0v1.800h-12z" fill="#3a86bc"/></svg><span id="t91" class="t " style="left:26.5px;top:235px;font-size:12px;line-height:16px;color:#000;transform:scaleX(0.9044);">DSC_0014.jpg</span><span id="t92" class="t " style="left:277.5px;top:235px;font-size:12px;line-height:16px;color:#000;transform:scaleX(0.9484);">05/02/2010 21:45</span><span id="t93" class="t " style="left:398px;top:235px;font-size:12px;line-height:16px;color:#000;transform:scaleX(0.8997);">JPEG image</span><div class="b " style="left:4px;top:252.5px;width:440px;height:18.5px;border:1px solid #d2d2d2;border-radius:3px;background:linear-gradient(#fbfbfb 0,#efefef 55%,#dfdfdf 100%);box-shadow:inset 0 0 0 1px rgba(255,255,255,.8);"></div><div class="b " style="left:271.5px;top:253px;width:1px;height:18px;background:#ececec;"></div><div class="b " style="left:391.5px;top:253px;width:1px;height:18px;background:#ececec;"></div><svg class="b" style="left:8px;top:255px;" width="16" height="14" viewBox="0 0 16 14"><rect x=".500" y=".500" width="15" height="13" fill="#fff" stroke="#9a9ea4"/><rect x="2" y="2" width="12" height="10" fill="url(#sky)"/><path d="M2 6.500c2-1.500 3-3.500 6-3.500s4 1 6 .500v4.500h-12z" fill="#e6f4fb"/><path d="M2 5.500c2 .500 3.500 2 5.500 3s4.500 .800 6.500 1.200v2.300h-12z" fill="#2c6e58"/><path d="M2 10.200c4 .300 8 .200 12 0v1.800h-12z" fill="#3a86bc"/></svg><span id="t94" class="t " style="left:26.5px;top:254px;font-size:12px;line-height:16px;color:#000;transform:scaleX(0.9044);">DSC_0015.jpg</span><span id="t95" class="t " style="left:277.5px;top:254px;font-size:12px;line-height:16px;color:#000;transform:scaleX(0.9484);">05/02/2010 21:45</span><span id="t96" class="t " style="left:398px;top:254px;font-size:12px;line-height:16px;color:#000;transform:scaleX(0.8997);">JPEG image</span></div>
<div class="b " style="left:1090px;top:260px;width:16px;height:267px;background:linear-gradient(90deg,#e6e6e6,#f4f4f4 40%,#f0f0f0);"></div>
<svg class="b" style="left:1094px;top:266px;" width="8" height="5" viewBox="0 0 8 5"><path d="M.500 4.500l3.500-4 3.500 4z" fill="#505050"/></svg>
<svg class="b" style="left:1094px;top:515px;" width="8" height="5" viewBox="0 0 8 5"><path d="M.500 .500l3.500 4 3.500-4z" fill="#505050"/></svg>
<div class="b " style="left:1091px;top:278px;width:14px;height:71px;border:1px solid #979797;border-radius:3px;background:linear-gradient(90deg,#f4f4f4 0,#e8e8e8 45%,#d4d4d4 50%,#dcdcdc 100%);box-shadow:inset 0 0 0 1px rgba(255,255,255,.7);"></div>
<div class="b " style="left:1094px;top:309px;width:8px;height:8px;background:repeating-linear-gradient(#6a6a6a 0 1px,#f4f4f4 1px 2px,transparent 2px 3px);"></div>
<div class="b " style="left:656px;top:527px;width:434px;height:16px;background:linear-gradient(#e8e8e8,#f4f4f4 40%,#f0f0f0);"></div>
<svg class="b" style="left:661px;top:531px;" width="5" height="8" viewBox="0 0 5 8"><path d="M4.500 .500l-4 3.500 4 3.500z" fill="#505050"/></svg>
<svg class="b" style="left:1079px;top:531px;" width="5" height="8" viewBox="0 0 5 8"><path d="M.500 .500l4 3.500-4 3.500z" fill="#505050"/></svg>
<div class="b " style="left:674px;top:528px;width:290px;height:14px;border:1px solid #979797;border-radius:3px;background:linear-gradient(#f4f4f4 0,#e8e8e8 45%,#d4d4d4 50%,#dcdcdc 100%);box-shadow:inset 0 0 0 1px rgba(255,255,255,.7);"></div>
<div class="b " style="left:815px;top:531px;width:8px;height:8px;background:repeating-linear-gradient(90deg,#6a6a6a 0 1px,#f4f4f4 1px 2px,transparent 2px 3px);"></div>
<div class="b " style="left:1090px;top:527px;width:16px;height:16px;background:#f0f0f0;"></div>
<span id="t97" class="t " style="left:658px;top:556px;font-size:12px;line-height:16px;color:#000;transform:scaleX(0.8584);">File name:</span>
<div class="b " style="left:752px;top:552px;width:246px;height:22px;background:#fff;border:1px solid #e2e3ea;border-top-color:#abadb3;border-radius:2px;"></div>
<span id="t98" class="t " style="left:756.5px;top:555px;font-size:12px;line-height:16px;color:#000;transform:scaleX(0.9107);">"DSC_0006.jpg" "DSC_0008.jpg" "DSC_0009</span>
<svg class="b" style="left:986px;top:562px;" width="8" height="5" viewBox="0 0 8 5"><path d="M.300 .500h7l-3.500 3.800z" fill="#000"/></svg>
<span id="t99" class="t " style="left:658px;top:582px;font-size:12px;line-height:16px;color:#000;transform:scaleX(0.8687);">Files of type:</span>
<div class="b " style="left:752px;top:580px;width:246px;height:21px;border:1px solid #707070;border-radius:3px;background:linear-gradient(#f2f2f2 0,#ebebeb 45%,#dddddd 50%,#cfcfcf 100%);box-shadow:inset 0 0 0 1px #fcfcfc;"></div>
<span id="t100" class="t " style="left:756.5px;top:583px;font-size:12px;line-height:16px;color:#000;transform:scaleX(0.8255);">All Formats</span>
<svg class="b" style="left:986px;top:589px;" width="8" height="5" viewBox="0 0 8 5"><path d="M.300 .500h7l-3.500 3.800z" fill="#000"/></svg>
<div class="b " style="left:1032px;top:553px;width:73px;height:21px;border:1px solid #3c7fb1;border-radius:3px;background:linear-gradient(#eaf6fd 0,#d9f0fc 45%,#bee6fd 50%,#a7d9f5 100%);box-shadow:inset 0 0 0 1px #48d8fb,inset 0 0 0 2px rgba(255,255,255,.6);"></div>
<span id="t101" class="t " style="left:1060.5px;top:555.5px;font-size:12px;line-height:16px;color:#000;transform:scaleX(0.9283);">OK</span>
<div class="b " style="left:1032px;top:579px;width:73px;height:21px;border:1px solid #707070;border-radius:3px;background:linear-gradient(#f2f2f2 0,#ebebeb 45%,#dddddd 50%,#cfcfcf 100%);box-shadow:inset 0 0 0 1px #fcfcfc;"></div>
<span id="t102" class="t " style="left:1052px;top:581.5px;font-size:12px;line-height:16px;color:#000;transform:scaleX(0.8860);">Cancel</span>
<div class="b " style="left:671px;top:622px;width:13px;height:13px;background:#f4f4f4;border:1px solid #b4b4b4;"></div>
<span id="t103" class="t " style="left:687.5px;top:622px;font-size:12px;line-height:16px;color:#838383;transform:scaleX(1.0206);">Image Sequence</span>
</body></html>
